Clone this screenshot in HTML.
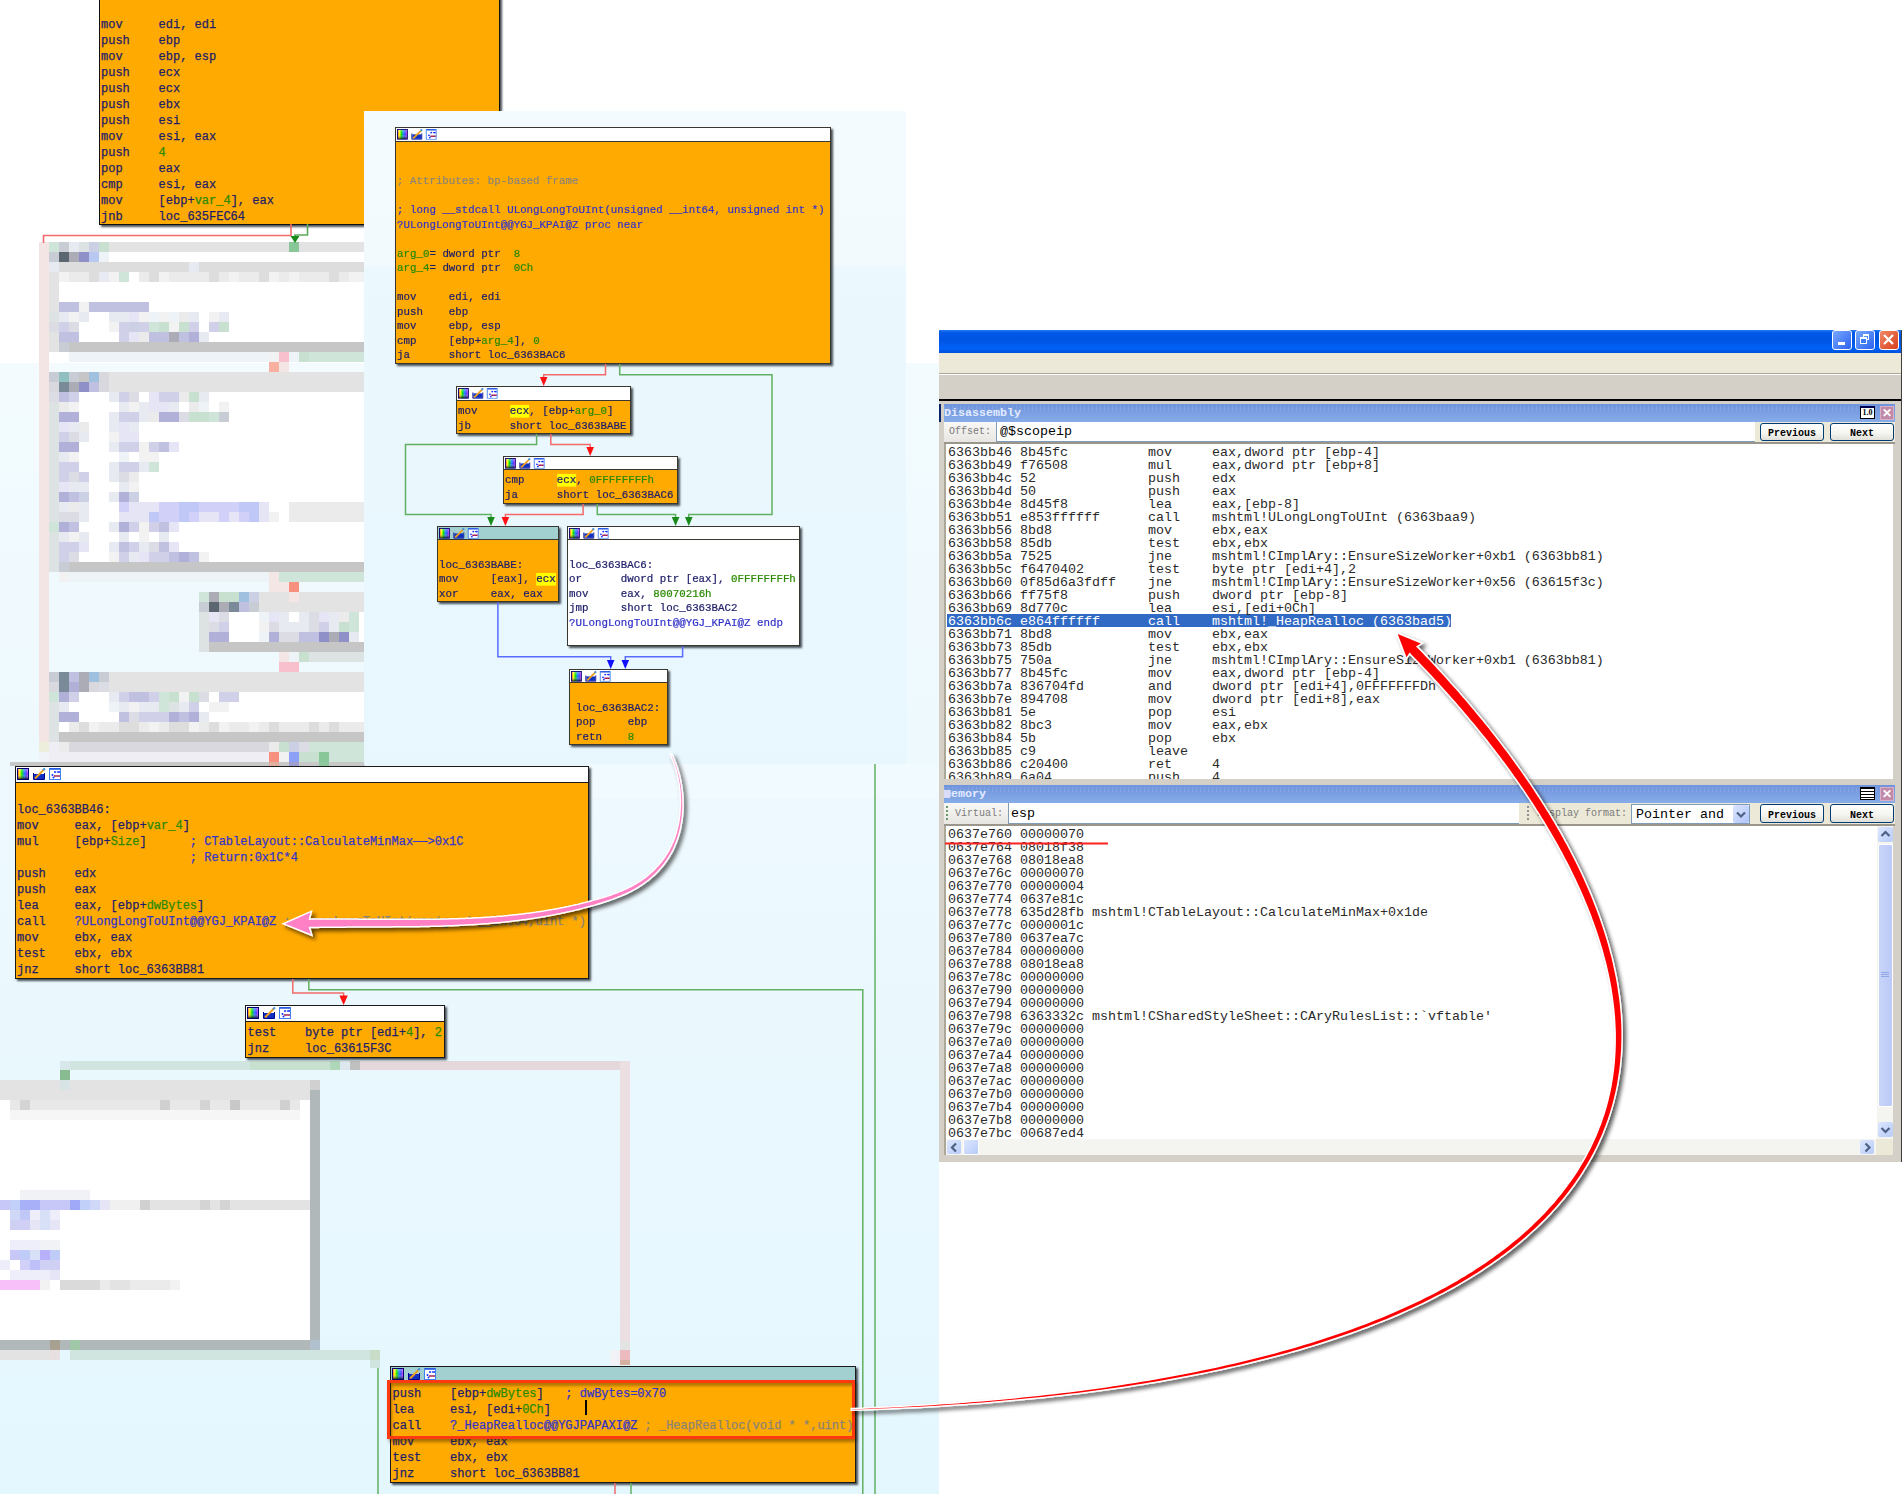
<!DOCTYPE html><html><head><meta charset="utf-8"><style>html,body{margin:0;padding:0;}body{width:1903px;height:1494px;position:relative;overflow:hidden;background:#ffffff;}#r div,#r span.a{position:absolute;}#r div div{position:static;}</style></head><body><div id="r"><div style="left:0;top:363px;width:939px;height:1131px;background:linear-gradient(180deg,#f3fbfe 0%,#edf9fe 40%,#e4f7fe 100%)"></div><div style="left:99px;top:-10px;width:401px;height:235px;background:#ffaa00;border-left:1px solid #111;border-bottom:1px solid #111;border-right:1px solid #111;box-sizing:border-box;box-shadow:2px 2px 2px rgba(30,38,45,0.8)"></div><div style="left:101px;top:16.5px;font:12px/16px 'Liberation Mono', monospace;color:#1e1e6a;white-space:pre;-webkit-text-stroke:0.25px;"><div style="position:static;height:16px;white-space:pre">mov     edi, edi</div><div style="position:static;height:16px;white-space:pre">push    ebp</div><div style="position:static;height:16px;white-space:pre">mov     ebp, esp</div><div style="position:static;height:16px;white-space:pre">push    ecx</div><div style="position:static;height:16px;white-space:pre">push    ecx</div><div style="position:static;height:16px;white-space:pre">push    ebx</div><div style="position:static;height:16px;white-space:pre">push    esi</div><div style="position:static;height:16px;white-space:pre">mov     esi, eax</div><div style="position:static;height:16px;white-space:pre">push    <span style="color:#2a8a00;">4</span></div><div style="position:static;height:16px;white-space:pre">pop     eax</div><div style="position:static;height:16px;white-space:pre">cmp     esi, eax</div><div style="position:static;height:16px;white-space:pre">mov     [ebp+<span style="color:#2a8a00;">var_4</span>], eax</div><div style="position:static;height:16px;white-space:pre">jnb     loc_635FEC64</div></div><div style="left:39px;top:242px;width:10px;height:10px;background:#f3e5e3"></div><div style="left:49px;top:242px;width:10px;height:10px;background:#d0e5da"></div><div style="left:59px;top:242px;width:10px;height:10px;background:#c8ccd5"></div><div style="left:69px;top:242px;width:10px;height:10px;background:#e8eaf2"></div><div style="left:79px;top:242px;width:10px;height:10px;background:#dde3e3"></div><div style="left:89px;top:242px;width:10px;height:10px;background:#ccd0e5"></div><div style="left:99px;top:242px;width:10px;height:10px;background:#c8e0d0"></div><div style="left:109px;top:242px;width:180px;height:10px;background:#e3e3e3"></div><div style="left:289px;top:242px;width:10px;height:10px;background:#88c898"></div><div style="left:299px;top:242px;width:70px;height:10px;background:#e3e3e3"></div><div style="left:39px;top:252px;width:10px;height:10px;background:#f3e5e3"></div><div style="left:49px;top:252px;width:10px;height:10px;background:#c8ccd5"></div><div style="left:59px;top:252px;width:10px;height:10px;background:#5c6670"></div><div style="left:69px;top:252px;width:10px;height:10px;background:#abacb5"></div><div style="left:79px;top:252px;width:10px;height:10px;background:#9090c8"></div><div style="left:89px;top:252px;width:10px;height:10px;background:#b8c8f0"></div><div style="left:99px;top:252px;width:10px;height:10px;background:#eef3f8"></div><div style="left:109px;top:252px;width:260px;height:10px;background:#ffffff"></div><div style="left:39px;top:262px;width:10px;height:10px;background:#f3e5e3"></div><div style="left:49px;top:262px;width:10px;height:10px;background:#e8eaf2"></div><div style="left:59px;top:262px;width:130px;height:10px;background:#dddddd"></div><div style="left:189px;top:262px;width:10px;height:10px;background:#e8eaf2"></div><div style="left:199px;top:262px;width:170px;height:10px;background:#dddddd"></div><div style="left:39px;top:272px;width:10px;height:10px;background:#f3e5e3"></div><div style="left:49px;top:272px;width:10px;height:10px;background:#e3e3e3"></div><div style="left:59px;top:272px;width:10px;height:10px;background:#f2f2f2"></div><div style="left:69px;top:272px;width:20px;height:10px;background:#ebebeb"></div><div style="left:89px;top:272px;width:10px;height:10px;background:#dddddd"></div><div style="left:99px;top:272px;width:10px;height:10px;background:#e8eaf2"></div><div style="left:109px;top:272px;width:10px;height:10px;background:#f2f2f2"></div><div style="left:119px;top:272px;width:10px;height:10px;background:#d0e5da"></div><div style="left:129px;top:272px;width:10px;height:10px;background:#ffffff"></div><div style="left:139px;top:272px;width:10px;height:10px;background:#ebebeb"></div><div style="left:149px;top:272px;width:10px;height:10px;background:#dddddd"></div><div style="left:159px;top:272px;width:10px;height:10px;background:#f2f2f2"></div><div style="left:169px;top:272px;width:40px;height:10px;background:#ebebeb"></div><div style="left:209px;top:272px;width:10px;height:10px;background:#dddddd"></div><div style="left:219px;top:272px;width:10px;height:10px;background:#ebebeb"></div><div style="left:229px;top:272px;width:10px;height:10px;background:#f2f2f2"></div><div style="left:239px;top:272px;width:20px;height:10px;background:#ebebeb"></div><div style="left:259px;top:272px;width:10px;height:10px;background:#dddddd"></div><div style="left:269px;top:272px;width:10px;height:10px;background:#f2f2f2"></div><div style="left:279px;top:272px;width:10px;height:10px;background:#ebebeb"></div><div style="left:289px;top:272px;width:10px;height:10px;background:#f2f2f2"></div><div style="left:299px;top:272px;width:30px;height:10px;background:#ebebeb"></div><div style="left:329px;top:272px;width:10px;height:10px;background:#dddddd"></div><div style="left:339px;top:272px;width:10px;height:10px;background:#ebebeb"></div><div style="left:349px;top:272px;width:20px;height:10px;background:#f2f2f2"></div><div style="left:39px;top:282px;width:10px;height:10px;background:#f3e5e3"></div><div style="left:49px;top:282px;width:10px;height:10px;background:#e3e3e3"></div><div style="left:59px;top:282px;width:310px;height:10px;background:#ffffff"></div><div style="left:39px;top:292px;width:10px;height:10px;background:#f3e5e3"></div><div style="left:49px;top:292px;width:10px;height:10px;background:#e3e3e3"></div><div style="left:59px;top:292px;width:310px;height:10px;background:#ffffff"></div><div style="left:39px;top:302px;width:10px;height:10px;background:#f3e5e3"></div><div style="left:49px;top:302px;width:10px;height:10px;background:#e3e3e3"></div><div style="left:59px;top:302px;width:20px;height:10px;background:#c0c0e0"></div><div style="left:79px;top:302px;width:10px;height:10px;background:#f2f2f2"></div><div style="left:89px;top:302px;width:60px;height:10px;background:#c0c0e0"></div><div style="left:149px;top:302px;width:220px;height:10px;background:#ffffff"></div><div style="left:39px;top:312px;width:10px;height:10px;background:#f3e5e3"></div><div style="left:49px;top:312px;width:10px;height:10px;background:#dde3e3"></div><div style="left:59px;top:312px;width:10px;height:10px;background:#e8eaf2"></div><div style="left:69px;top:312px;width:10px;height:10px;background:#f2f2f2"></div><div style="left:79px;top:312px;width:10px;height:10px;background:#e8eaf2"></div><div style="left:89px;top:312px;width:20px;height:10px;background:#ffffff"></div><div style="left:109px;top:312px;width:20px;height:10px;background:#e8eaf2"></div><div style="left:129px;top:312px;width:10px;height:10px;background:#e5e5f5"></div><div style="left:139px;top:312px;width:10px;height:10px;background:#f2f2f2"></div><div style="left:149px;top:312px;width:10px;height:10px;background:#eef3f8"></div><div style="left:159px;top:312px;width:10px;height:10px;background:#f2f2f2"></div><div style="left:169px;top:312px;width:10px;height:10px;background:#eef3f8"></div><div style="left:179px;top:312px;width:10px;height:10px;background:#ebebeb"></div><div style="left:189px;top:312px;width:10px;height:10px;background:#e8eaf2"></div><div style="left:199px;top:312px;width:10px;height:10px;background:#ffffff"></div><div style="left:209px;top:312px;width:10px;height:10px;background:#f2f2f2"></div><div style="left:219px;top:312px;width:10px;height:10px;background:#e8eaf2"></div><div style="left:229px;top:312px;width:140px;height:10px;background:#ffffff"></div><div style="left:39px;top:322px;width:10px;height:10px;background:#f3e5e3"></div><div style="left:49px;top:322px;width:10px;height:10px;background:#dcdce5"></div><div style="left:59px;top:322px;width:10px;height:10px;background:#d0d0e8"></div><div style="left:69px;top:322px;width:10px;height:10px;background:#dcdce5"></div><div style="left:79px;top:322px;width:30px;height:10px;background:#ffffff"></div><div style="left:109px;top:322px;width:10px;height:10px;background:#f2f2f2"></div><div style="left:119px;top:322px;width:10px;height:10px;background:#d0d0e8"></div><div style="left:129px;top:322px;width:10px;height:10px;background:#ccd0e5"></div><div style="left:139px;top:322px;width:10px;height:10px;background:#d0d0e8"></div><div style="left:149px;top:322px;width:10px;height:10px;background:#d0e5da"></div><div style="left:159px;top:322px;width:10px;height:10px;background:#c8e0d0"></div><div style="left:169px;top:322px;width:10px;height:10px;background:#f2f2f2"></div><div style="left:179px;top:322px;width:10px;height:10px;background:#c8e0d0"></div><div style="left:189px;top:322px;width:10px;height:10px;background:#d0d0e8"></div><div style="left:199px;top:322px;width:10px;height:10px;background:#ffffff"></div><div style="left:209px;top:322px;width:10px;height:10px;background:#d0d0e8"></div><div style="left:219px;top:322px;width:10px;height:10px;background:#c8e0d0"></div><div style="left:229px;top:322px;width:140px;height:10px;background:#ffffff"></div><div style="left:39px;top:332px;width:10px;height:10px;background:#f3e5e3"></div><div style="left:49px;top:332px;width:10px;height:10px;background:#e3e3e3"></div><div style="left:59px;top:332px;width:20px;height:10px;background:#c0c0e0"></div><div style="left:79px;top:332px;width:40px;height:10px;background:#ffffff"></div><div style="left:119px;top:332px;width:10px;height:10px;background:#d0d0e8"></div><div style="left:129px;top:332px;width:10px;height:10px;background:#e5e5f5"></div><div style="left:139px;top:332px;width:10px;height:10px;background:#ebebeb"></div><div style="left:149px;top:332px;width:20px;height:10px;background:#c0c0e0"></div><div style="left:169px;top:332px;width:10px;height:10px;background:#abacb5"></div><div style="left:179px;top:332px;width:10px;height:10px;background:#c0c0e0"></div><div style="left:189px;top:332px;width:10px;height:10px;background:#b0b0d8"></div><div style="left:199px;top:332px;width:10px;height:10px;background:#e8eaf2"></div><div style="left:209px;top:332px;width:160px;height:10px;background:#ffffff"></div><div style="left:39px;top:342px;width:10px;height:10px;background:#f3e5e3"></div><div style="left:49px;top:342px;width:10px;height:10px;background:#e3e3e3"></div><div style="left:59px;top:342px;width:10px;height:10px;background:#c8ccd5"></div><div style="left:69px;top:342px;width:300px;height:10px;background:#c6c6c6"></div><div style="left:39px;top:352px;width:10px;height:10px;background:#f3e5e3"></div><div style="left:49px;top:352px;width:10px;height:10px;background:#ffffff"></div><div style="left:69px;top:352px;width:200px;height:10px;background:#eef3f8"></div><div style="left:269px;top:352px;width:10px;height:10px;background:#f2f2f2"></div><div style="left:279px;top:352px;width:10px;height:10px;background:#f8c0cc"></div><div style="left:289px;top:352px;width:10px;height:10px;background:#eef3f8"></div><div style="left:299px;top:352px;width:10px;height:10px;background:#c8e0d0"></div><div style="left:309px;top:352px;width:60px;height:10px;background:#d0e5da"></div><div style="left:39px;top:362px;width:10px;height:10px;background:#f3e5e3"></div><div style="left:269px;top:362px;width:10px;height:10px;background:#f8b0a0"></div><div style="left:279px;top:362px;width:10px;height:10px;background:#f5e6e6"></div><div style="left:39px;top:372px;width:10px;height:10px;background:#f3e5e3"></div><div style="left:49px;top:372px;width:10px;height:10px;background:#c8ccd5"></div><div style="left:59px;top:372px;width:10px;height:10px;background:#90c0c0"></div><div style="left:69px;top:372px;width:10px;height:10px;background:#c8ccd5"></div><div style="left:79px;top:372px;width:10px;height:10px;background:#c6c6c6"></div><div style="left:89px;top:372px;width:10px;height:10px;background:#a0c0e0"></div><div style="left:99px;top:372px;width:10px;height:10px;background:#d8d8de"></div><div style="left:109px;top:372px;width:260px;height:10px;background:#e3e3e3"></div><div style="left:39px;top:382px;width:10px;height:10px;background:#f3e5e3"></div><div style="left:49px;top:382px;width:10px;height:10px;background:#d8d8de"></div><div style="left:59px;top:382px;width:10px;height:10px;background:#7a8a98"></div><div style="left:69px;top:382px;width:10px;height:10px;background:#abacb5"></div><div style="left:79px;top:382px;width:10px;height:10px;background:#9090c8"></div><div style="left:89px;top:382px;width:10px;height:10px;background:#c0c0e0"></div><div style="left:99px;top:382px;width:10px;height:10px;background:#d8d8de"></div><div style="left:109px;top:382px;width:260px;height:10px;background:#e3e3e3"></div><div style="left:39px;top:392px;width:10px;height:10px;background:#f3e5e3"></div><div style="left:49px;top:392px;width:10px;height:10px;background:#dcdce5"></div><div style="left:59px;top:392px;width:10px;height:10px;background:#c0c0e0"></div><div style="left:69px;top:392px;width:10px;height:10px;background:#d0d0e8"></div><div style="left:79px;top:392px;width:30px;height:10px;background:#ffffff"></div><div style="left:109px;top:392px;width:10px;height:10px;background:#e8eaf2"></div><div style="left:119px;top:392px;width:10px;height:10px;background:#d0d0e8"></div><div style="left:129px;top:392px;width:10px;height:10px;background:#dcdce5"></div><div style="left:139px;top:392px;width:10px;height:10px;background:#ffffff"></div><div style="left:149px;top:392px;width:10px;height:10px;background:#e5e5f5"></div><div style="left:159px;top:392px;width:20px;height:10px;background:#d0d0e8"></div><div style="left:179px;top:392px;width:10px;height:10px;background:#ebebeb"></div><div style="left:189px;top:392px;width:10px;height:10px;background:#c8e0d0"></div><div style="left:199px;top:392px;width:10px;height:10px;background:#e8eaf2"></div><div style="left:209px;top:392px;width:160px;height:10px;background:#ffffff"></div><div style="left:39px;top:402px;width:10px;height:10px;background:#f3e5e3"></div><div style="left:49px;top:402px;width:10px;height:10px;background:#dde3e3"></div><div style="left:59px;top:402px;width:10px;height:10px;background:#ebebeb"></div><div style="left:69px;top:402px;width:10px;height:10px;background:#f2f2f2"></div><div style="left:79px;top:402px;width:40px;height:10px;background:#ffffff"></div><div style="left:119px;top:402px;width:10px;height:10px;background:#e8eaf2"></div><div style="left:129px;top:402px;width:10px;height:10px;background:#f2f2f2"></div><div style="left:139px;top:402px;width:10px;height:10px;background:#e8eaf2"></div><div style="left:149px;top:402px;width:20px;height:10px;background:#e5e5f5"></div><div style="left:169px;top:402px;width:10px;height:10px;background:#e8eaf2"></div><div style="left:179px;top:402px;width:10px;height:10px;background:#ffffff"></div><div style="left:189px;top:402px;width:10px;height:10px;background:#ebebeb"></div><div style="left:199px;top:402px;width:10px;height:10px;background:#eef3f8"></div><div style="left:209px;top:402px;width:10px;height:10px;background:#ffffff"></div><div style="left:219px;top:402px;width:10px;height:10px;background:#f2f2f2"></div><div style="left:229px;top:402px;width:140px;height:10px;background:#ffffff"></div><div style="left:39px;top:412px;width:10px;height:10px;background:#f3e5e3"></div><div style="left:49px;top:412px;width:10px;height:10px;background:#dde3e3"></div><div style="left:59px;top:412px;width:20px;height:10px;background:#b0b0d8"></div><div style="left:79px;top:412px;width:30px;height:10px;background:#ffffff"></div><div style="left:109px;top:412px;width:10px;height:10px;background:#e8eaf2"></div><div style="left:119px;top:412px;width:20px;height:10px;background:#d0d0e8"></div><div style="left:139px;top:412px;width:10px;height:10px;background:#e8eaf2"></div><div style="left:149px;top:412px;width:10px;height:10px;background:#ebebeb"></div><div style="left:159px;top:412px;width:20px;height:10px;background:#b0b0d8"></div><div style="left:179px;top:412px;width:10px;height:10px;background:#dcdce5"></div><div style="left:189px;top:412px;width:20px;height:10px;background:#c8e0d0"></div><div style="left:209px;top:412px;width:10px;height:10px;background:#d0e5da"></div><div style="left:219px;top:412px;width:10px;height:10px;background:#c8ccd5"></div><div style="left:229px;top:412px;width:140px;height:10px;background:#ffffff"></div><div style="left:39px;top:422px;width:10px;height:10px;background:#f3e5e3"></div><div style="left:49px;top:422px;width:10px;height:10px;background:#dde3e3"></div><div style="left:59px;top:422px;width:10px;height:10px;background:#e5e5f5"></div><div style="left:69px;top:422px;width:10px;height:10px;background:#e8eaf2"></div><div style="left:79px;top:422px;width:10px;height:10px;background:#ebebeb"></div><div style="left:89px;top:422px;width:20px;height:10px;background:#ffffff"></div><div style="left:109px;top:422px;width:10px;height:10px;background:#e8eaf2"></div><div style="left:119px;top:422px;width:10px;height:10px;background:#e5e5f5"></div><div style="left:129px;top:422px;width:10px;height:10px;background:#e8eaf2"></div><div style="left:139px;top:422px;width:230px;height:10px;background:#ffffff"></div><div style="left:39px;top:432px;width:10px;height:10px;background:#f3e5e3"></div><div style="left:49px;top:432px;width:10px;height:10px;background:#dde3e3"></div><div style="left:59px;top:432px;width:10px;height:10px;background:#d0d0e8"></div><div style="left:69px;top:432px;width:10px;height:10px;background:#dcdce5"></div><div style="left:79px;top:432px;width:10px;height:10px;background:#e8eaf2"></div><div style="left:89px;top:432px;width:20px;height:10px;background:#ffffff"></div><div style="left:109px;top:432px;width:10px;height:10px;background:#f2f2f2"></div><div style="left:119px;top:432px;width:20px;height:10px;background:#e5e5f5"></div><div style="left:139px;top:432px;width:230px;height:10px;background:#ffffff"></div><div style="left:39px;top:442px;width:10px;height:10px;background:#f3e5e3"></div><div style="left:49px;top:442px;width:10px;height:10px;background:#dde3e3"></div><div style="left:59px;top:442px;width:20px;height:10px;background:#b0b0d8"></div><div style="left:79px;top:442px;width:30px;height:10px;background:#ffffff"></div><div style="left:109px;top:442px;width:10px;height:10px;background:#e8eaf2"></div><div style="left:119px;top:442px;width:20px;height:10px;background:#d0d0e8"></div><div style="left:139px;top:442px;width:10px;height:10px;background:#f2f2f2"></div><div style="left:149px;top:442px;width:10px;height:10px;background:#d0d0e8"></div><div style="left:159px;top:442px;width:10px;height:10px;background:#c0c0e0"></div><div style="left:169px;top:442px;width:10px;height:10px;background:#e5e5f5"></div><div style="left:179px;top:442px;width:190px;height:10px;background:#ffffff"></div><div style="left:39px;top:452px;width:10px;height:10px;background:#f3e5e3"></div><div style="left:49px;top:452px;width:10px;height:10px;background:#dde3e3"></div><div style="left:59px;top:452px;width:10px;height:10px;background:#e8eaf2"></div><div style="left:69px;top:452px;width:10px;height:10px;background:#f2f2f2"></div><div style="left:79px;top:452px;width:40px;height:10px;background:#ffffff"></div><div style="left:119px;top:452px;width:10px;height:10px;background:#eef3f8"></div><div style="left:129px;top:452px;width:10px;height:10px;background:#ffffff"></div><div style="left:139px;top:452px;width:20px;height:10px;background:#f2f2f2"></div><div style="left:159px;top:452px;width:210px;height:10px;background:#ffffff"></div><div style="left:39px;top:462px;width:10px;height:10px;background:#f3e5e3"></div><div style="left:49px;top:462px;width:10px;height:10px;background:#dde3e3"></div><div style="left:59px;top:462px;width:20px;height:10px;background:#d0d0e8"></div><div style="left:79px;top:462px;width:30px;height:10px;background:#ffffff"></div><div style="left:109px;top:462px;width:10px;height:10px;background:#e8eaf2"></div><div style="left:119px;top:462px;width:20px;height:10px;background:#d0d0e8"></div><div style="left:139px;top:462px;width:10px;height:10px;background:#e8eaf2"></div><div style="left:149px;top:462px;width:10px;height:10px;background:#d0e5da"></div><div style="left:159px;top:462px;width:210px;height:10px;background:#ffffff"></div><div style="left:39px;top:472px;width:10px;height:10px;background:#f3e5e3"></div><div style="left:49px;top:472px;width:10px;height:10px;background:#dde3e3"></div><div style="left:59px;top:472px;width:10px;height:10px;background:#d0d0e8"></div><div style="left:69px;top:472px;width:10px;height:10px;background:#dcdce5"></div><div style="left:79px;top:472px;width:10px;height:10px;background:#d0d0e8"></div><div style="left:89px;top:472px;width:20px;height:10px;background:#ffffff"></div><div style="left:109px;top:472px;width:10px;height:10px;background:#e8eaf2"></div><div style="left:119px;top:472px;width:10px;height:10px;background:#dcdce5"></div><div style="left:129px;top:472px;width:10px;height:10px;background:#ebebeb"></div><div style="left:139px;top:472px;width:230px;height:10px;background:#ffffff"></div><div style="left:39px;top:482px;width:10px;height:10px;background:#f3e5e3"></div><div style="left:49px;top:482px;width:10px;height:10px;background:#dde3e3"></div><div style="left:59px;top:482px;width:10px;height:10px;background:#e5e5f5"></div><div style="left:69px;top:482px;width:20px;height:10px;background:#e8eaf2"></div><div style="left:89px;top:482px;width:30px;height:10px;background:#ffffff"></div><div style="left:119px;top:482px;width:10px;height:10px;background:#e8eaf2"></div><div style="left:129px;top:482px;width:10px;height:10px;background:#f2f2f2"></div><div style="left:139px;top:482px;width:230px;height:10px;background:#ffffff"></div><div style="left:39px;top:492px;width:10px;height:10px;background:#f3e5e3"></div><div style="left:49px;top:492px;width:10px;height:10px;background:#dde3e3"></div><div style="left:59px;top:492px;width:10px;height:10px;background:#b0b0d8"></div><div style="left:69px;top:492px;width:10px;height:10px;background:#c0c0e0"></div><div style="left:79px;top:492px;width:10px;height:10px;background:#ccd0e5"></div><div style="left:89px;top:492px;width:20px;height:10px;background:#ffffff"></div><div style="left:109px;top:492px;width:10px;height:10px;background:#e8eaf2"></div><div style="left:119px;top:492px;width:10px;height:10px;background:#b0b0d8"></div><div style="left:129px;top:492px;width:10px;height:10px;background:#ccd0e5"></div><div style="left:139px;top:492px;width:230px;height:10px;background:#ffffff"></div><div style="left:39px;top:502px;width:10px;height:10px;background:#f3e5e3"></div><div style="left:49px;top:502px;width:10px;height:10px;background:#dde3e3"></div><div style="left:59px;top:502px;width:10px;height:10px;background:#e8eaf2"></div><div style="left:69px;top:502px;width:10px;height:10px;background:#ebebeb"></div><div style="left:79px;top:502px;width:10px;height:10px;background:#e8eaf2"></div><div style="left:89px;top:502px;width:30px;height:10px;background:#ffffff"></div><div style="left:119px;top:502px;width:10px;height:10px;background:#d0d0f8"></div><div style="left:129px;top:502px;width:30px;height:10px;background:#e5e5f5"></div><div style="left:159px;top:502px;width:20px;height:10px;background:#d0d0f8"></div><div style="left:179px;top:502px;width:20px;height:10px;background:#c0c8f8"></div><div style="left:199px;top:502px;width:40px;height:10px;background:#d0d0f8"></div><div style="left:239px;top:502px;width:20px;height:10px;background:#c0c8f8"></div><div style="left:259px;top:502px;width:10px;height:10px;background:#e5e5f5"></div><div style="left:269px;top:502px;width:20px;height:10px;background:#ffffff"></div><div style="left:289px;top:502px;width:80px;height:10px;background:#ebebeb"></div><div style="left:39px;top:512px;width:10px;height:10px;background:#f3e5e3"></div><div style="left:49px;top:512px;width:10px;height:10px;background:#dde3e3"></div><div style="left:59px;top:512px;width:20px;height:10px;background:#dcdce5"></div><div style="left:79px;top:512px;width:10px;height:10px;background:#e8eaf2"></div><div style="left:89px;top:512px;width:30px;height:10px;background:#ffffff"></div><div style="left:119px;top:512px;width:30px;height:10px;background:#e5e5f5"></div><div style="left:149px;top:512px;width:10px;height:10px;background:#c0c8f8"></div><div style="left:159px;top:512px;width:20px;height:10px;background:#d0d0f8"></div><div style="left:179px;top:512px;width:10px;height:10px;background:#c0c8f8"></div><div style="left:189px;top:512px;width:10px;height:10px;background:#d0d0f8"></div><div style="left:199px;top:512px;width:20px;height:10px;background:#e5e5f5"></div><div style="left:219px;top:512px;width:10px;height:10px;background:#d0d0f8"></div><div style="left:229px;top:512px;width:10px;height:10px;background:#e5e5f5"></div><div style="left:239px;top:512px;width:10px;height:10px;background:#d0d0f8"></div><div style="left:249px;top:512px;width:10px;height:10px;background:#c0c8f8"></div><div style="left:259px;top:512px;width:10px;height:10px;background:#e5e5f5"></div><div style="left:269px;top:512px;width:10px;height:10px;background:#f2f2f2"></div><div style="left:279px;top:512px;width:10px;height:10px;background:#ffffff"></div><div style="left:289px;top:512px;width:80px;height:10px;background:#ebebeb"></div><div style="left:39px;top:522px;width:10px;height:10px;background:#f3e5e3"></div><div style="left:49px;top:522px;width:10px;height:10px;background:#d0e5da"></div><div style="left:59px;top:522px;width:10px;height:10px;background:#b0b0d8"></div><div style="left:69px;top:522px;width:10px;height:10px;background:#c0c0e0"></div><div style="left:79px;top:522px;width:30px;height:10px;background:#ffffff"></div><div style="left:109px;top:522px;width:10px;height:10px;background:#e8eaf2"></div><div style="left:119px;top:522px;width:10px;height:10px;background:#b0b0d8"></div><div style="left:129px;top:522px;width:10px;height:10px;background:#d0d0e8"></div><div style="left:139px;top:522px;width:10px;height:10px;background:#f2f2f2"></div><div style="left:149px;top:522px;width:10px;height:10px;background:#d0d0e8"></div><div style="left:159px;top:522px;width:10px;height:10px;background:#c0c0e0"></div><div style="left:169px;top:522px;width:10px;height:10px;background:#e5e5f5"></div><div style="left:179px;top:522px;width:190px;height:10px;background:#ffffff"></div><div style="left:39px;top:532px;width:10px;height:10px;background:#f3e5e3"></div><div style="left:49px;top:532px;width:10px;height:10px;background:#dde3e3"></div><div style="left:59px;top:532px;width:10px;height:10px;background:#e8eaf2"></div><div style="left:69px;top:532px;width:10px;height:10px;background:#f2f2f2"></div><div style="left:79px;top:532px;width:10px;height:10px;background:#e8eaf2"></div><div style="left:89px;top:532px;width:30px;height:10px;background:#ffffff"></div><div style="left:119px;top:532px;width:10px;height:10px;background:#e8eaf2"></div><div style="left:129px;top:532px;width:10px;height:10px;background:#ffffff"></div><div style="left:139px;top:532px;width:10px;height:10px;background:#f2f2f2"></div><div style="left:149px;top:532px;width:10px;height:10px;background:#ffffff"></div><div style="left:159px;top:532px;width:10px;height:10px;background:#e8eaf2"></div><div style="left:169px;top:532px;width:200px;height:10px;background:#ffffff"></div><div style="left:39px;top:542px;width:10px;height:10px;background:#f3e5e3"></div><div style="left:49px;top:542px;width:10px;height:10px;background:#dde3e3"></div><div style="left:59px;top:542px;width:20px;height:10px;background:#d0d0e8"></div><div style="left:79px;top:542px;width:10px;height:10px;background:#e5e5f5"></div><div style="left:89px;top:542px;width:20px;height:10px;background:#ffffff"></div><div style="left:109px;top:542px;width:10px;height:10px;background:#e8eaf2"></div><div style="left:119px;top:542px;width:10px;height:10px;background:#c0c0e0"></div><div style="left:129px;top:542px;width:10px;height:10px;background:#d0d0e8"></div><div style="left:139px;top:542px;width:10px;height:10px;background:#e8eaf2"></div><div style="left:149px;top:542px;width:10px;height:10px;background:#dcdce5"></div><div style="left:159px;top:542px;width:10px;height:10px;background:#c0c0e0"></div><div style="left:169px;top:542px;width:10px;height:10px;background:#e5e5f5"></div><div style="left:179px;top:542px;width:190px;height:10px;background:#ffffff"></div><div style="left:39px;top:552px;width:10px;height:10px;background:#f3e5e3"></div><div style="left:49px;top:552px;width:10px;height:10px;background:#dde3e3"></div><div style="left:59px;top:552px;width:10px;height:10px;background:#d0d0e8"></div><div style="left:69px;top:552px;width:10px;height:10px;background:#dcdce5"></div><div style="left:79px;top:552px;width:30px;height:10px;background:#ffffff"></div><div style="left:109px;top:552px;width:10px;height:10px;background:#f2f2f2"></div><div style="left:119px;top:552px;width:10px;height:10px;background:#d0d0e8"></div><div style="left:129px;top:552px;width:10px;height:10px;background:#e8eaf2"></div><div style="left:139px;top:552px;width:10px;height:10px;background:#e5e5f5"></div><div style="left:149px;top:552px;width:20px;height:10px;background:#d0d0e8"></div><div style="left:169px;top:552px;width:10px;height:10px;background:#c0c0e0"></div><div style="left:179px;top:552px;width:10px;height:10px;background:#b0b0d8"></div><div style="left:189px;top:552px;width:10px;height:10px;background:#c0c0e0"></div><div style="left:199px;top:552px;width:10px;height:10px;background:#f2f2f2"></div><div style="left:209px;top:552px;width:160px;height:10px;background:#ffffff"></div><div style="left:39px;top:562px;width:10px;height:10px;background:#f3e5e3"></div><div style="left:49px;top:562px;width:10px;height:10px;background:#dde3e3"></div><div style="left:59px;top:562px;width:10px;height:10px;background:#c8ccd5"></div><div style="left:69px;top:562px;width:300px;height:10px;background:#c6c6c6"></div><div style="left:39px;top:572px;width:10px;height:10px;background:#f3e5e3"></div><div style="left:59px;top:572px;width:10px;height:10px;background:#f2f2f2"></div><div style="left:69px;top:572px;width:200px;height:10px;background:#eef3f8"></div><div style="left:269px;top:572px;width:10px;height:10px;background:#f5e6e6"></div><div style="left:279px;top:572px;width:90px;height:10px;background:#d0e5da"></div><div style="left:39px;top:582px;width:10px;height:10px;background:#f3e5e3"></div><div style="left:269px;top:582px;width:20px;height:10px;background:#f5e6e6"></div><div style="left:289px;top:582px;width:10px;height:10px;background:#f89080"></div><div style="left:39px;top:592px;width:10px;height:10px;background:#f3e5e3"></div><div style="left:199px;top:592px;width:10px;height:10px;background:#d0e5da"></div><div style="left:209px;top:592px;width:10px;height:10px;background:#abacb5"></div><div style="left:219px;top:592px;width:20px;height:10px;background:#c8e0d0"></div><div style="left:239px;top:592px;width:10px;height:10px;background:#a0c0e0"></div><div style="left:249px;top:592px;width:10px;height:10px;background:#ccd0e5"></div><div style="left:259px;top:592px;width:30px;height:10px;background:#e3e3e3"></div><div style="left:289px;top:592px;width:10px;height:10px;background:#f5e6e6"></div><div style="left:299px;top:592px;width:70px;height:10px;background:#e3e3e3"></div><div style="left:39px;top:602px;width:10px;height:10px;background:#f3e5e3"></div><div style="left:199px;top:602px;width:10px;height:10px;background:#c8ccd5"></div><div style="left:209px;top:602px;width:10px;height:10px;background:#5c6670"></div><div style="left:219px;top:602px;width:10px;height:10px;background:#abacb5"></div><div style="left:229px;top:602px;width:10px;height:10px;background:#7a8a98"></div><div style="left:239px;top:602px;width:10px;height:10px;background:#c0c0e0"></div><div style="left:249px;top:602px;width:10px;height:10px;background:#c8ccd5"></div><div style="left:259px;top:602px;width:110px;height:10px;background:#e3e3e3"></div><div style="left:39px;top:612px;width:10px;height:10px;background:#f3e5e3"></div><div style="left:199px;top:612px;width:10px;height:10px;background:#dde3e3"></div><div style="left:209px;top:612px;width:10px;height:10px;background:#e5e5f5"></div><div style="left:219px;top:612px;width:10px;height:10px;background:#dcdce5"></div><div style="left:229px;top:612px;width:30px;height:10px;background:#ffffff"></div><div style="left:259px;top:612px;width:10px;height:10px;background:#eef3f8"></div><div style="left:269px;top:612px;width:10px;height:10px;background:#e5e5f5"></div><div style="left:279px;top:612px;width:10px;height:10px;background:#e8eaf2"></div><div style="left:289px;top:612px;width:10px;height:10px;background:#ffffff"></div><div style="left:299px;top:612px;width:10px;height:10px;background:#e8eaf2"></div><div style="left:309px;top:612px;width:10px;height:10px;background:#dcdce5"></div><div style="left:319px;top:612px;width:10px;height:10px;background:#e5e5f5"></div><div style="left:329px;top:612px;width:10px;height:10px;background:#e8eaf2"></div><div style="left:339px;top:612px;width:10px;height:10px;background:#ebebeb"></div><div style="left:349px;top:612px;width:10px;height:10px;background:#d0e5da"></div><div style="left:359px;top:612px;width:10px;height:10px;background:#ffffff"></div><div style="left:39px;top:622px;width:10px;height:10px;background:#f3e5e3"></div><div style="left:199px;top:622px;width:10px;height:10px;background:#dde3e3"></div><div style="left:209px;top:622px;width:10px;height:10px;background:#dcdce5"></div><div style="left:219px;top:622px;width:10px;height:10px;background:#d0d0e8"></div><div style="left:229px;top:622px;width:30px;height:10px;background:#ffffff"></div><div style="left:259px;top:622px;width:10px;height:10px;background:#f2f2f2"></div><div style="left:269px;top:622px;width:10px;height:10px;background:#dcdce5"></div><div style="left:279px;top:622px;width:30px;height:10px;background:#e8eaf2"></div><div style="left:309px;top:622px;width:10px;height:10px;background:#dcdce5"></div><div style="left:319px;top:622px;width:10px;height:10px;background:#d0d0e8"></div><div style="left:329px;top:622px;width:10px;height:10px;background:#e8eaf2"></div><div style="left:339px;top:622px;width:10px;height:10px;background:#c8e0d0"></div><div style="left:349px;top:622px;width:10px;height:10px;background:#d0e5da"></div><div style="left:359px;top:622px;width:10px;height:10px;background:#ffffff"></div><div style="left:39px;top:632px;width:10px;height:10px;background:#f3e5e3"></div><div style="left:199px;top:632px;width:10px;height:10px;background:#dde3e3"></div><div style="left:209px;top:632px;width:20px;height:10px;background:#b0b0d8"></div><div style="left:229px;top:632px;width:30px;height:10px;background:#ffffff"></div><div style="left:259px;top:632px;width:10px;height:10px;background:#eef3f8"></div><div style="left:269px;top:632px;width:10px;height:10px;background:#b0b0d8"></div><div style="left:279px;top:632px;width:20px;height:10px;background:#dcdce5"></div><div style="left:299px;top:632px;width:20px;height:10px;background:#c0c0e0"></div><div style="left:319px;top:632px;width:10px;height:10px;background:#9090c8"></div><div style="left:329px;top:632px;width:10px;height:10px;background:#abacb5"></div><div style="left:339px;top:632px;width:10px;height:10px;background:#9090c8"></div><div style="left:349px;top:632px;width:10px;height:10px;background:#e8eaf2"></div><div style="left:359px;top:632px;width:10px;height:10px;background:#ffffff"></div><div style="left:39px;top:642px;width:10px;height:10px;background:#f3e5e3"></div><div style="left:199px;top:642px;width:10px;height:10px;background:#dde3e3"></div><div style="left:209px;top:642px;width:160px;height:10px;background:#c6c6c6"></div><div style="left:39px;top:652px;width:10px;height:10px;background:#f3e5e3"></div><div style="left:279px;top:652px;width:10px;height:10px;background:#f5e6e6"></div><div style="left:289px;top:652px;width:10px;height:10px;background:#eef3f8"></div><div style="left:299px;top:652px;width:10px;height:10px;background:#c8e0d0"></div><div style="left:309px;top:652px;width:60px;height:10px;background:#dde3e3"></div><div style="left:39px;top:662px;width:10px;height:10px;background:#f3e5e3"></div><div style="left:279px;top:662px;width:20px;height:10px;background:#f8c0cc"></div><div style="left:39px;top:672px;width:10px;height:10px;background:#f3e5e3"></div><div style="left:49px;top:672px;width:10px;height:10px;background:#c8ccd5"></div><div style="left:59px;top:672px;width:10px;height:10px;background:#7a8a98"></div><div style="left:69px;top:672px;width:10px;height:10px;background:#c0c0e0"></div><div style="left:79px;top:672px;width:10px;height:10px;background:#abacb5"></div><div style="left:89px;top:672px;width:10px;height:10px;background:#a0c0e0"></div><div style="left:99px;top:672px;width:10px;height:10px;background:#c8ccd5"></div><div style="left:109px;top:672px;width:260px;height:10px;background:#e3e3e3"></div><div style="left:39px;top:682px;width:10px;height:10px;background:#f3e5e3"></div><div style="left:49px;top:682px;width:10px;height:10px;background:#d8d8de"></div><div style="left:59px;top:682px;width:10px;height:10px;background:#7a8a98"></div><div style="left:69px;top:682px;width:10px;height:10px;background:#b0b0d8"></div><div style="left:79px;top:682px;width:10px;height:10px;background:#abacb5"></div><div style="left:89px;top:682px;width:10px;height:10px;background:#d8d8de"></div><div style="left:99px;top:682px;width:10px;height:10px;background:#dcdce5"></div><div style="left:109px;top:682px;width:260px;height:10px;background:#e3e3e3"></div><div style="left:39px;top:692px;width:10px;height:10px;background:#f3e5e3"></div><div style="left:49px;top:692px;width:10px;height:10px;background:#d0e5da"></div><div style="left:59px;top:692px;width:10px;height:10px;background:#b0b0d8"></div><div style="left:69px;top:692px;width:10px;height:10px;background:#d0d0e8"></div><div style="left:79px;top:692px;width:30px;height:10px;background:#ffffff"></div><div style="left:109px;top:692px;width:10px;height:10px;background:#e8eaf2"></div><div style="left:119px;top:692px;width:10px;height:10px;background:#d0d0e8"></div><div style="left:129px;top:692px;width:20px;height:10px;background:#c0c0e0"></div><div style="left:149px;top:692px;width:10px;height:10px;background:#d0d0e8"></div><div style="left:159px;top:692px;width:10px;height:10px;background:#d0e5da"></div><div style="left:169px;top:692px;width:10px;height:10px;background:#c8e0d0"></div><div style="left:179px;top:692px;width:10px;height:10px;background:#f2f2f2"></div><div style="left:189px;top:692px;width:10px;height:10px;background:#c8e0d0"></div><div style="left:199px;top:692px;width:10px;height:10px;background:#dcdce5"></div><div style="left:209px;top:692px;width:10px;height:10px;background:#ffffff"></div><div style="left:219px;top:692px;width:20px;height:10px;background:#d0d0e8"></div><div style="left:239px;top:692px;width:130px;height:10px;background:#ffffff"></div><div style="left:39px;top:702px;width:10px;height:10px;background:#f3e5e3"></div><div style="left:49px;top:702px;width:10px;height:10px;background:#dde3e3"></div><div style="left:59px;top:702px;width:10px;height:10px;background:#e8eaf2"></div><div style="left:69px;top:702px;width:40px;height:10px;background:#ffffff"></div><div style="left:109px;top:702px;width:10px;height:10px;background:#eef3f8"></div><div style="left:119px;top:702px;width:10px;height:10px;background:#e8eaf2"></div><div style="left:129px;top:702px;width:10px;height:10px;background:#f2f2f2"></div><div style="left:139px;top:702px;width:20px;height:10px;background:#e8eaf2"></div><div style="left:159px;top:702px;width:10px;height:10px;background:#d0e5da"></div><div style="left:169px;top:702px;width:10px;height:10px;background:#dde3e3"></div><div style="left:179px;top:702px;width:10px;height:10px;background:#e8eaf2"></div><div style="left:189px;top:702px;width:10px;height:10px;background:#d0d0e8"></div><div style="left:199px;top:702px;width:10px;height:10px;background:#ffffff"></div><div style="left:209px;top:702px;width:20px;height:10px;background:#f2f2f2"></div><div style="left:229px;top:702px;width:140px;height:10px;background:#ffffff"></div><div style="left:39px;top:712px;width:10px;height:10px;background:#f3e5e3"></div><div style="left:49px;top:712px;width:10px;height:10px;background:#dde3e3"></div><div style="left:59px;top:712px;width:20px;height:10px;background:#b0b0d8"></div><div style="left:79px;top:712px;width:40px;height:10px;background:#ffffff"></div><div style="left:119px;top:712px;width:10px;height:10px;background:#c0c0e0"></div><div style="left:129px;top:712px;width:10px;height:10px;background:#dcdce5"></div><div style="left:139px;top:712px;width:30px;height:10px;background:#d0d0e8"></div><div style="left:169px;top:712px;width:10px;height:10px;background:#b0b0d8"></div><div style="left:179px;top:712px;width:10px;height:10px;background:#c0c0e0"></div><div style="left:189px;top:712px;width:10px;height:10px;background:#b0b0d8"></div><div style="left:199px;top:712px;width:10px;height:10px;background:#e8eaf2"></div><div style="left:209px;top:712px;width:160px;height:10px;background:#ffffff"></div><div style="left:39px;top:722px;width:10px;height:10px;background:#f3e5e3"></div><div style="left:49px;top:722px;width:10px;height:10px;background:#dde3e3"></div><div style="left:59px;top:722px;width:10px;height:10px;background:#ffffff"></div><div style="left:69px;top:722px;width:10px;height:10px;background:#ebebeb"></div><div style="left:79px;top:722px;width:10px;height:10px;background:#dddddd"></div><div style="left:89px;top:722px;width:10px;height:10px;background:#f2f2f2"></div><div style="left:99px;top:722px;width:20px;height:10px;background:#ebebeb"></div><div style="left:119px;top:722px;width:20px;height:10px;background:#dddddd"></div><div style="left:139px;top:722px;width:10px;height:10px;background:#ebebeb"></div><div style="left:149px;top:722px;width:10px;height:10px;background:#f2f2f2"></div><div style="left:159px;top:722px;width:10px;height:10px;background:#ebebeb"></div><div style="left:169px;top:722px;width:20px;height:10px;background:#dddddd"></div><div style="left:189px;top:722px;width:10px;height:10px;background:#f2f2f2"></div><div style="left:199px;top:722px;width:10px;height:10px;background:#ebebeb"></div><div style="left:209px;top:722px;width:10px;height:10px;background:#dddddd"></div><div style="left:219px;top:722px;width:10px;height:10px;background:#f2f2f2"></div><div style="left:229px;top:722px;width:20px;height:10px;background:#ebebeb"></div><div style="left:249px;top:722px;width:10px;height:10px;background:#f2f2f2"></div><div style="left:259px;top:722px;width:10px;height:10px;background:#ebebeb"></div><div style="left:269px;top:722px;width:10px;height:10px;background:#dddddd"></div><div style="left:279px;top:722px;width:30px;height:10px;background:#ebebeb"></div><div style="left:309px;top:722px;width:10px;height:10px;background:#dddddd"></div><div style="left:319px;top:722px;width:10px;height:10px;background:#ebebeb"></div><div style="left:329px;top:722px;width:10px;height:10px;background:#dddddd"></div><div style="left:339px;top:722px;width:30px;height:10px;background:#ebebeb"></div><div style="left:39px;top:732px;width:10px;height:10px;background:#f3e5e3"></div><div style="left:49px;top:732px;width:10px;height:10px;background:#dde3e3"></div><div style="left:59px;top:732px;width:310px;height:10px;background:#c6c6c6"></div><div style="left:39px;top:742px;width:10px;height:10px;background:#eeeedd"></div><div style="left:49px;top:742px;width:10px;height:10px;background:#f0eef5"></div><div style="left:59px;top:742px;width:10px;height:10px;background:#ebebeb"></div><div style="left:69px;top:742px;width:200px;height:10px;background:#d8d8de"></div><div style="left:269px;top:742px;width:10px;height:10px;background:#ebebeb"></div><div style="left:279px;top:742px;width:10px;height:10px;background:#c8e0d0"></div><div style="left:289px;top:742px;width:10px;height:10px;background:#ccd0e5"></div><div style="left:299px;top:742px;width:10px;height:10px;background:#dcdce5"></div><div style="left:309px;top:742px;width:60px;height:10px;background:#d0e5da"></div><div style="left:49px;top:752px;width:220px;height:10px;background:#f0eef5"></div><div style="left:269px;top:752px;width:10px;height:10px;background:#f89080"></div><div style="left:279px;top:752px;width:10px;height:10px;background:#f2f2f2"></div><div style="left:289px;top:752px;width:10px;height:10px;background:#8ca0f8"></div><div style="left:299px;top:752px;width:20px;height:10px;background:#c8e0d0"></div><div style="left:319px;top:752px;width:10px;height:10px;background:#88c898"></div><div style="left:329px;top:752px;width:40px;height:10px;background:#d0e5da"></div><div style="left:10px;top:762px;width:355px;height:4px;background:#c8c8c8;"></div><div style="left:269px;top:762px;width:10px;height:4px;background:#e0b0a0;"></div><div style="left:289px;top:762px;width:10px;height:4px;background:#a0a0d0;"></div><div style="left:319px;top:762px;width:10px;height:4px;background:#90c8a0;"></div><div style="left:39px;top:752px;width:10px;height:10px;background:#f0f4f8;"></div><div style="left:60px;top:1061px;width:10px;height:9px;background:#d8e8ea"></div><div style="left:70px;top:1061px;width:180px;height:9px;background:#d0e5e0"></div><div style="left:250px;top:1061px;width:80px;height:9px;background:#c8e0d0"></div><div style="left:330px;top:1061px;width:10px;height:9px;background:#b0d8b8"></div><div style="left:340px;top:1061px;width:10px;height:9px;background:#dde8ee"></div><div style="left:350px;top:1061px;width:10px;height:9px;background:#c0c0c0"></div><div style="left:360px;top:1061px;width:270px;height:9px;background:#e5d8dc"></div><div style="left:60px;top:1070px;width:10px;height:10px;background:#88bb90"></div><div style="left:0px;top:1080px;width:310px;height:20px;background:#e3e3e3"></div><div style="left:60px;top:1080px;width:10px;height:10px;background:#d8e3e5"></div><div style="left:310px;top:1080px;width:10px;height:10px;background:#d0d0d0"></div><div style="left:310px;top:1090px;width:10px;height:260px;background:#b0b8ba"></div><div style="left:10px;top:1100px;width:290px;height:10px;background:#e8e8e8"></div><div style="left:0px;top:1100px;width:10px;height:20px;background:#ffffff"></div><div style="left:300px;top:1100px;width:10px;height:20px;background:#ffffff"></div><div style="left:20px;top:1100px;width:10px;height:10px;background:#d4d4d4"></div><div style="left:160px;top:1100px;width:10px;height:10px;background:#d0d0d0"></div><div style="left:230px;top:1100px;width:10px;height:10px;background:#c8c8c8"></div><div style="left:280px;top:1100px;width:10px;height:10px;background:#d0d0d0"></div><div style="left:200px;top:1100px;width:10px;height:10px;background:#d4d4d4"></div><div style="left:10px;top:1110px;width:290px;height:10px;background:#f6f6f6"></div><div style="left:0px;top:1120px;width:310px;height:70px;background:#ffffff"></div><div style="left:0px;top:1190px;width:310px;height:10px;background:#ffffff"></div><div style="left:20px;top:1190px;width:70px;height:10px;background:#f0f2f5"></div><div style="left:0px;top:1200px;width:10px;height:10px;background:#c8c8f8"></div><div style="left:10px;top:1200px;width:10px;height:10px;background:#c0d0f8"></div><div style="left:20px;top:1200px;width:20px;height:10px;background:#a8b0f8"></div><div style="left:40px;top:1200px;width:30px;height:10px;background:#c8c8f8"></div><div style="left:70px;top:1200px;width:10px;height:10px;background:#a0a8f8"></div><div style="left:80px;top:1200px;width:10px;height:10px;background:#c0d0f8"></div><div style="left:90px;top:1200px;width:10px;height:10px;background:#d0d8f8"></div><div style="left:100px;top:1200px;width:10px;height:10px;background:#e5e5f5"></div><div style="left:110px;top:1200px;width:30px;height:10px;background:#f0f0f0"></div><div style="left:140px;top:1200px;width:170px;height:10px;background:#e3e3e3"></div><div style="left:140px;top:1200px;width:10px;height:10px;background:#d0d0d0"></div><div style="left:200px;top:1200px;width:10px;height:10px;background:#d4d4d4"></div><div style="left:220px;top:1200px;width:10px;height:10px;background:#d4d4d4"></div><div style="left:0px;top:1210px;width:310px;height:80px;background:#ffffff"></div><div style="left:10px;top:1210px;width:10px;height:10px;background:#d0d8f8"></div><div style="left:20px;top:1210px;width:10px;height:10px;background:#c0c8f8"></div><div style="left:30px;top:1210px;width:10px;height:10px;background:#eeeefa"></div><div style="left:40px;top:1210px;width:10px;height:10px;background:#d8e0f8"></div><div style="left:50px;top:1210px;width:10px;height:10px;background:#eeeefa"></div><div style="left:10px;top:1220px;width:20px;height:10px;background:#d0d0f5"></div><div style="left:30px;top:1220px;width:10px;height:10px;background:#e5e5f5"></div><div style="left:40px;top:1220px;width:10px;height:10px;background:#d8e0f8"></div><div style="left:50px;top:1220px;width:10px;height:10px;background:#e5e5f5"></div><div style="left:10px;top:1240px;width:30px;height:10px;background:#eeeefa"></div><div style="left:40px;top:1240px;width:20px;height:10px;background:#f0f2f5"></div><div style="left:10px;top:1250px;width:10px;height:10px;background:#c8c8f8"></div><div style="left:20px;top:1250px;width:10px;height:10px;background:#c0ccf8"></div><div style="left:30px;top:1250px;width:10px;height:10px;background:#d8e0f8"></div><div style="left:40px;top:1250px;width:10px;height:10px;background:#b8b0f8"></div><div style="left:50px;top:1250px;width:10px;height:10px;background:#c0ccf8"></div><div style="left:0px;top:1260px;width:10px;height:10px;background:#eeeefa"></div><div style="left:20px;top:1260px;width:10px;height:10px;background:#d0d0f8"></div><div style="left:30px;top:1260px;width:10px;height:10px;background:#c0c0f8"></div><div style="left:40px;top:1260px;width:20px;height:10px;background:#d0d0f5"></div><div style="left:10px;top:1270px;width:40px;height:10px;background:#eeeefa"></div><div style="left:50px;top:1270px;width:10px;height:10px;background:#e5e5f5"></div><div style="left:0px;top:1280px;width:40px;height:10px;background:#f8c0f8"></div><div style="left:40px;top:1280px;width:10px;height:10px;background:#f2f2f2"></div><div style="left:60px;top:1280px;width:40px;height:10px;background:#dadada"></div><div style="left:100px;top:1280px;width:10px;height:10px;background:#ebebeb"></div><div style="left:110px;top:1280px;width:20px;height:10px;background:#e3e3e3"></div><div style="left:130px;top:1280px;width:40px;height:10px;background:#ebebeb"></div><div style="left:170px;top:1280px;width:10px;height:10px;background:#f2f2f2"></div><div style="left:0px;top:1290px;width:310px;height:50px;background:#ffffff"></div><div style="left:0px;top:1340px;width:310px;height:10px;background:#b0b8ba"></div><div style="left:50px;top:1340px;width:10px;height:10px;background:#a8a090"></div><div style="left:70px;top:1340px;width:10px;height:10px;background:#a0c8a8"></div><div style="left:310px;top:1340px;width:10px;height:10px;background:#b0c0cc"></div><div style="left:0px;top:1350px;width:50px;height:10px;background:#e3e3e3"></div><div style="left:50px;top:1350px;width:10px;height:10px;background:#e8e0e0"></div><div style="left:70px;top:1350px;width:300px;height:10px;background:#d0e5e0"></div><div style="left:370px;top:1350px;width:10px;height:10px;background:#c8dcc8"></div><div style="left:370px;top:1360px;width:10px;height:8px;background:#d0e5e0"></div><div style="left:620px;top:1061px;width:10px;height:280px;background:#ebdfe2"></div><div style="left:620px;top:1341px;width:10px;height:9px;background:#e3e3e3"></div><div style="left:620px;top:1350px;width:10px;height:10px;background:#ebbbc0"></div><div style="left:620px;top:1360px;width:10px;height:5px;background:#d4b0a0"></div><div style="left:610px;top:1350px;width:10px;height:15px;background:#f0f2f5"></div><svg style="position:absolute;left:0;top:0" width="1903" height="1494"><path d="M291,224 L291,235.5 L43.5,235.5 L43.5,243" fill="none" stroke="#f06a6a" stroke-width="1.6"/><path d="M307.5,224 L307.5,235 L295,235 L295,238" fill="none" stroke="#5aa85a" stroke-width="1.6"/><path d="M290.5,236 L299.5,236 L295,243 Z" fill="#1a8a1a"/></svg><div style="left:364px;top:111px;width:542px;height:654px;background:linear-gradient(180deg,#f3fbfe 0%,#f2fafe 23.7%,#ebf8fe 23.8%,#e8f7fe 100%)"></div><div style="left:589px;top:764px;width:350px;height:34px;background:#f1fafe;"></div><div style="left:395px;top:127px;width:436px;height:237px;background:#ffaa00;border:1px solid #3a3630;box-sizing:border-box;box-shadow:2px 2px 2px rgba(30,38,45,0.8);"></div><div style="left:396px;top:128px;width:434px;height:14px;background:#ffffff;border-bottom:1px solid #3a3630;box-sizing:border-box"></div><div style="left:397px;top:129px;width:46px;height:12px;transform:scale(0.9);transform-origin:0 0;"><svg width="46" height="12" viewBox="0 0 46 12" style="position:absolute;left:0;top:0"><defs><linearGradient id="hue" x1="0" x2="1" y1="0" y2="0"><stop offset="0" stop-color="#ff3030"/><stop offset="0.2" stop-color="#ffff00"/><stop offset="0.4" stop-color="#00e000"/><stop offset="0.6" stop-color="#2080ff"/><stop offset="0.8" stop-color="#4040ff"/><stop offset="1" stop-color="#ff40ff"/></linearGradient><linearGradient id="shade" x1="0" x2="0" y1="0" y2="1"><stop offset="0" stop-color="#fff" stop-opacity="0.35"/><stop offset="0.5" stop-color="#fff" stop-opacity="0"/><stop offset="1" stop-color="#000" stop-opacity="0.75"/></linearGradient></defs><rect x="0.5" y="0.5" width="11" height="11" fill="url(#hue)" stroke="#000070"/><rect x="1" y="1" width="10" height="10" fill="url(#shade)"/><path d="M16.5,5 V11.5 H27.5 V5" fill="none" stroke="#000090" stroke-width="1"/><rect x="17" y="6" width="10" height="5" fill="#1030c0"/><path d="M18,10.5 L27,1.5" stroke="#f0a020" stroke-width="2"/><path d="M26,2 L28,0.5" stroke="#4090e0" stroke-width="2"/><rect x="32.5" y="0.5" width="11" height="11" fill="#ffffff" stroke="#4080f0"/><path d="M33,1 H43" stroke="#2050e0" stroke-width="1.5"/><circle cx="35.5" cy="7" r="1" fill="#1030ff"/><circle cx="36.5" cy="9.5" r="1" fill="#1030ff"/><circle cx="38" cy="4" r="1" fill="#1030ff"/><circle cx="40.5" cy="4" r="0.8" fill="#1030ff"/><circle cx="42" cy="4" r="1" fill="#1030ff"/><path d="M37,8 H43" stroke="#a02060" stroke-width="1.5"/></svg></div><div style="left:397px;top:145.2px;font:12px/16px 'Liberation Mono', monospace;color:#1e1e6a;white-space:pre;-webkit-text-stroke:0.25px;transform:scale(0.9,0.908);transform-origin:0 0;"><div style="position:static;height:16px;white-space:pre">&nbsp;</div><div style="position:static;height:16px;white-space:pre">&nbsp;</div><div style="position:static;height:16px;white-space:pre"><span style="color:#8c8474;">; Attributes: bp-based frame</span></div><div style="position:static;height:16px;white-space:pre">&nbsp;</div><div style="position:static;height:16px;white-space:pre"><span style="color:#3434c8;">; long __stdcall ULongLongToUInt(unsigned __int64, unsigned int *)</span></div><div style="position:static;height:16px;white-space:pre"><span style="color:#3434c8;">?ULongLongToUInt@@YGJ_KPAI@Z proc near</span></div><div style="position:static;height:16px;white-space:pre">&nbsp;</div><div style="position:static;height:16px;white-space:pre"><span style="color:#2a8a00;">arg_0</span>= dword ptr  <span style="color:#2a8a00;">8</span></div><div style="position:static;height:16px;white-space:pre"><span style="color:#2a8a00;">arg_4</span>= dword ptr  <span style="color:#2a8a00;">0Ch</span></div><div style="position:static;height:16px;white-space:pre">&nbsp;</div><div style="position:static;height:16px;white-space:pre">mov     edi, edi</div><div style="position:static;height:16px;white-space:pre">push    ebp</div><div style="position:static;height:16px;white-space:pre">mov     ebp, esp</div><div style="position:static;height:16px;white-space:pre">cmp     [ebp+<span style="color:#2a8a00;">arg_4</span>], <span style="color:#2a8a00;">0</span></div><div style="position:static;height:16px;white-space:pre">ja      short loc_6363BAC6</div></div><div style="left:456px;top:386px;width:175px;height:48px;background:#ffaa00;border:1px solid #3a3630;box-sizing:border-box;box-shadow:2px 2px 2px rgba(30,38,45,0.8);"></div><div style="left:457px;top:387px;width:173px;height:14px;background:#ffffff;border-bottom:1px solid #3a3630;box-sizing:border-box"></div><div style="left:458px;top:388px;width:46px;height:12px;transform:scale(0.9);transform-origin:0 0;"><svg width="46" height="12" viewBox="0 0 46 12" style="position:absolute;left:0;top:0"><defs><linearGradient id="hue" x1="0" x2="1" y1="0" y2="0"><stop offset="0" stop-color="#ff3030"/><stop offset="0.2" stop-color="#ffff00"/><stop offset="0.4" stop-color="#00e000"/><stop offset="0.6" stop-color="#2080ff"/><stop offset="0.8" stop-color="#4040ff"/><stop offset="1" stop-color="#ff40ff"/></linearGradient><linearGradient id="shade" x1="0" x2="0" y1="0" y2="1"><stop offset="0" stop-color="#fff" stop-opacity="0.35"/><stop offset="0.5" stop-color="#fff" stop-opacity="0"/><stop offset="1" stop-color="#000" stop-opacity="0.75"/></linearGradient></defs><rect x="0.5" y="0.5" width="11" height="11" fill="url(#hue)" stroke="#000070"/><rect x="1" y="1" width="10" height="10" fill="url(#shade)"/><path d="M16.5,5 V11.5 H27.5 V5" fill="none" stroke="#000090" stroke-width="1"/><rect x="17" y="6" width="10" height="5" fill="#1030c0"/><path d="M18,10.5 L27,1.5" stroke="#f0a020" stroke-width="2"/><path d="M26,2 L28,0.5" stroke="#4090e0" stroke-width="2"/><rect x="32.5" y="0.5" width="11" height="11" fill="#ffffff" stroke="#4080f0"/><path d="M33,1 H43" stroke="#2050e0" stroke-width="1.5"/><circle cx="35.5" cy="7" r="1" fill="#1030ff"/><circle cx="36.5" cy="9.5" r="1" fill="#1030ff"/><circle cx="38" cy="4" r="1" fill="#1030ff"/><circle cx="40.5" cy="4" r="0.8" fill="#1030ff"/><circle cx="42" cy="4" r="1" fill="#1030ff"/><path d="M37,8 H43" stroke="#a02060" stroke-width="1.5"/></svg></div><div style="left:458.3px;top:404.1px;font:12px/16px 'Liberation Mono', monospace;color:#1e1e6a;white-space:pre;-webkit-text-stroke:0.25px;transform:scale(0.9,0.908);transform-origin:0 0;"><div style="position:static;height:16px;white-space:pre">mov     <span style="color:#1e1e6a;background:#ffff00;">ecx</span>, [ebp+<span style="color:#2a8a00;">arg_0</span>]</div><div style="position:static;height:16px;white-space:pre">jb      short loc_6363BABE</div></div><div style="left:503px;top:456px;width:175px;height:48px;background:#ffaa00;border:1px solid #3a3630;box-sizing:border-box;box-shadow:2px 2px 2px rgba(30,38,45,0.8);"></div><div style="left:504px;top:457px;width:173px;height:13px;background:#ffffff;border-bottom:1px solid #3a3630;box-sizing:border-box"></div><div style="left:505px;top:458px;width:46px;height:12px;transform:scale(0.9);transform-origin:0 0;"><svg width="46" height="12" viewBox="0 0 46 12" style="position:absolute;left:0;top:0"><defs><linearGradient id="hue" x1="0" x2="1" y1="0" y2="0"><stop offset="0" stop-color="#ff3030"/><stop offset="0.2" stop-color="#ffff00"/><stop offset="0.4" stop-color="#00e000"/><stop offset="0.6" stop-color="#2080ff"/><stop offset="0.8" stop-color="#4040ff"/><stop offset="1" stop-color="#ff40ff"/></linearGradient><linearGradient id="shade" x1="0" x2="0" y1="0" y2="1"><stop offset="0" stop-color="#fff" stop-opacity="0.35"/><stop offset="0.5" stop-color="#fff" stop-opacity="0"/><stop offset="1" stop-color="#000" stop-opacity="0.75"/></linearGradient></defs><rect x="0.5" y="0.5" width="11" height="11" fill="url(#hue)" stroke="#000070"/><rect x="1" y="1" width="10" height="10" fill="url(#shade)"/><path d="M16.5,5 V11.5 H27.5 V5" fill="none" stroke="#000090" stroke-width="1"/><rect x="17" y="6" width="10" height="5" fill="#1030c0"/><path d="M18,10.5 L27,1.5" stroke="#f0a020" stroke-width="2"/><path d="M26,2 L28,0.5" stroke="#4090e0" stroke-width="2"/><rect x="32.5" y="0.5" width="11" height="11" fill="#ffffff" stroke="#4080f0"/><path d="M33,1 H43" stroke="#2050e0" stroke-width="1.5"/><circle cx="35.5" cy="7" r="1" fill="#1030ff"/><circle cx="36.5" cy="9.5" r="1" fill="#1030ff"/><circle cx="38" cy="4" r="1" fill="#1030ff"/><circle cx="40.5" cy="4" r="0.8" fill="#1030ff"/><circle cx="42" cy="4" r="1" fill="#1030ff"/><path d="M37,8 H43" stroke="#a02060" stroke-width="1.5"/></svg></div><div style="left:505px;top:473.4px;font:12px/16px 'Liberation Mono', monospace;color:#1e1e6a;white-space:pre;-webkit-text-stroke:0.25px;transform:scale(0.9,0.908);transform-origin:0 0;"><div style="position:static;height:16px;white-space:pre">cmp     <span style="color:#1e1e6a;background:#ffff00;">ecx</span>, <span style="color:#2a8a00;">0FFFFFFFFh</span></div><div style="position:static;height:16px;white-space:pre">ja      short loc_6363BAC6</div></div><div style="left:437px;top:526px;width:122px;height:76px;background:#ffaa00;border:1px solid #3a3630;box-sizing:border-box;box-shadow:2px 2px 2px rgba(30,38,45,0.8);"></div><div style="left:438px;top:527px;width:120px;height:13px;background:#a2d0d0;border-bottom:1px solid #3a3630;box-sizing:border-box"></div><div style="left:439px;top:528px;width:46px;height:12px;transform:scale(0.9);transform-origin:0 0;"><svg width="46" height="12" viewBox="0 0 46 12" style="position:absolute;left:0;top:0"><defs><linearGradient id="hue" x1="0" x2="1" y1="0" y2="0"><stop offset="0" stop-color="#ff3030"/><stop offset="0.2" stop-color="#ffff00"/><stop offset="0.4" stop-color="#00e000"/><stop offset="0.6" stop-color="#2080ff"/><stop offset="0.8" stop-color="#4040ff"/><stop offset="1" stop-color="#ff40ff"/></linearGradient><linearGradient id="shade" x1="0" x2="0" y1="0" y2="1"><stop offset="0" stop-color="#fff" stop-opacity="0.35"/><stop offset="0.5" stop-color="#fff" stop-opacity="0"/><stop offset="1" stop-color="#000" stop-opacity="0.75"/></linearGradient></defs><rect x="0.5" y="0.5" width="11" height="11" fill="url(#hue)" stroke="#000070"/><rect x="1" y="1" width="10" height="10" fill="url(#shade)"/><path d="M16.5,5 V11.5 H27.5 V5" fill="none" stroke="#000090" stroke-width="1"/><rect x="17" y="6" width="10" height="5" fill="#1030c0"/><path d="M18,10.5 L27,1.5" stroke="#f0a020" stroke-width="2"/><path d="M26,2 L28,0.5" stroke="#4090e0" stroke-width="2"/><rect x="32.5" y="0.5" width="11" height="11" fill="#ffffff" stroke="#4080f0"/><path d="M33,1 H43" stroke="#2050e0" stroke-width="1.5"/><circle cx="35.5" cy="7" r="1" fill="#1030ff"/><circle cx="36.5" cy="9.5" r="1" fill="#1030ff"/><circle cx="38" cy="4" r="1" fill="#1030ff"/><circle cx="40.5" cy="4" r="0.8" fill="#1030ff"/><circle cx="42" cy="4" r="1" fill="#1030ff"/><path d="M37,8 H43" stroke="#a02060" stroke-width="1.5"/></svg></div><div style="left:439px;top:543.3px;font:12px/16px 'Liberation Mono', monospace;color:#1e1e6a;white-space:pre;-webkit-text-stroke:0.25px;transform:scale(0.9,0.908);transform-origin:0 0;"><div style="position:static;height:16px;white-space:pre">&nbsp;</div><div style="position:static;height:16px;white-space:pre">loc_6363BABE:</div><div style="position:static;height:16px;white-space:pre">mov     [eax], <span style="color:#1e1e6a;background:#ffff00;">ecx</span></div><div style="position:static;height:16px;white-space:pre">xor     eax, eax</div></div><div style="left:567px;top:526px;width:233px;height:120px;background:#ffffff;border:1px solid #3a3630;box-sizing:border-box;box-shadow:2px 2px 2px rgba(30,38,45,0.8);"></div><div style="left:568px;top:527px;width:231px;height:13px;background:#ffffff;border-bottom:1px solid #3a3630;box-sizing:border-box"></div><div style="left:569px;top:528px;width:46px;height:12px;transform:scale(0.9);transform-origin:0 0;"><svg width="46" height="12" viewBox="0 0 46 12" style="position:absolute;left:0;top:0"><defs><linearGradient id="hue" x1="0" x2="1" y1="0" y2="0"><stop offset="0" stop-color="#ff3030"/><stop offset="0.2" stop-color="#ffff00"/><stop offset="0.4" stop-color="#00e000"/><stop offset="0.6" stop-color="#2080ff"/><stop offset="0.8" stop-color="#4040ff"/><stop offset="1" stop-color="#ff40ff"/></linearGradient><linearGradient id="shade" x1="0" x2="0" y1="0" y2="1"><stop offset="0" stop-color="#fff" stop-opacity="0.35"/><stop offset="0.5" stop-color="#fff" stop-opacity="0"/><stop offset="1" stop-color="#000" stop-opacity="0.75"/></linearGradient></defs><rect x="0.5" y="0.5" width="11" height="11" fill="url(#hue)" stroke="#000070"/><rect x="1" y="1" width="10" height="10" fill="url(#shade)"/><path d="M16.5,5 V11.5 H27.5 V5" fill="none" stroke="#000090" stroke-width="1"/><rect x="17" y="6" width="10" height="5" fill="#1030c0"/><path d="M18,10.5 L27,1.5" stroke="#f0a020" stroke-width="2"/><path d="M26,2 L28,0.5" stroke="#4090e0" stroke-width="2"/><rect x="32.5" y="0.5" width="11" height="11" fill="#ffffff" stroke="#4080f0"/><path d="M33,1 H43" stroke="#2050e0" stroke-width="1.5"/><circle cx="35.5" cy="7" r="1" fill="#1030ff"/><circle cx="36.5" cy="9.5" r="1" fill="#1030ff"/><circle cx="38" cy="4" r="1" fill="#1030ff"/><circle cx="40.5" cy="4" r="0.8" fill="#1030ff"/><circle cx="42" cy="4" r="1" fill="#1030ff"/><path d="M37,8 H43" stroke="#a02060" stroke-width="1.5"/></svg></div><div style="left:568.5px;top:543.3px;font:12px/16px 'Liberation Mono', monospace;color:#1e1e6a;white-space:pre;-webkit-text-stroke:0.25px;transform:scale(0.9,0.908);transform-origin:0 0;"><div style="position:static;height:16px;white-space:pre">&nbsp;</div><div style="position:static;height:16px;white-space:pre">loc_6363BAC6:</div><div style="position:static;height:16px;white-space:pre">or      dword ptr [eax], <span style="color:#2a8a00;">0FFFFFFFFh</span></div><div style="position:static;height:16px;white-space:pre">mov     eax, <span style="color:#2a8a00;">80070216h</span></div><div style="position:static;height:16px;white-space:pre">jmp     short loc_6363BAC2</div><div style="position:static;height:16px;white-space:pre"><span style="color:#3434c8;">?ULongLongToUInt@@YGJ_KPAI@Z endp</span></div></div><div style="left:569px;top:669px;width:99px;height:76px;background:#ffaa00;border:1px solid #3a3630;box-sizing:border-box;box-shadow:2px 2px 2px rgba(30,38,45,0.8);"></div><div style="left:570px;top:670px;width:97px;height:13px;background:#ffffff;border-bottom:1px solid #3a3630;box-sizing:border-box"></div><div style="left:571px;top:671px;width:46px;height:12px;transform:scale(0.9);transform-origin:0 0;"><svg width="46" height="12" viewBox="0 0 46 12" style="position:absolute;left:0;top:0"><defs><linearGradient id="hue" x1="0" x2="1" y1="0" y2="0"><stop offset="0" stop-color="#ff3030"/><stop offset="0.2" stop-color="#ffff00"/><stop offset="0.4" stop-color="#00e000"/><stop offset="0.6" stop-color="#2080ff"/><stop offset="0.8" stop-color="#4040ff"/><stop offset="1" stop-color="#ff40ff"/></linearGradient><linearGradient id="shade" x1="0" x2="0" y1="0" y2="1"><stop offset="0" stop-color="#fff" stop-opacity="0.35"/><stop offset="0.5" stop-color="#fff" stop-opacity="0"/><stop offset="1" stop-color="#000" stop-opacity="0.75"/></linearGradient></defs><rect x="0.5" y="0.5" width="11" height="11" fill="url(#hue)" stroke="#000070"/><rect x="1" y="1" width="10" height="10" fill="url(#shade)"/><path d="M16.5,5 V11.5 H27.5 V5" fill="none" stroke="#000090" stroke-width="1"/><rect x="17" y="6" width="10" height="5" fill="#1030c0"/><path d="M18,10.5 L27,1.5" stroke="#f0a020" stroke-width="2"/><path d="M26,2 L28,0.5" stroke="#4090e0" stroke-width="2"/><rect x="32.5" y="0.5" width="11" height="11" fill="#ffffff" stroke="#4080f0"/><path d="M33,1 H43" stroke="#2050e0" stroke-width="1.5"/><circle cx="35.5" cy="7" r="1" fill="#1030ff"/><circle cx="36.5" cy="9.5" r="1" fill="#1030ff"/><circle cx="38" cy="4" r="1" fill="#1030ff"/><circle cx="40.5" cy="4" r="0.8" fill="#1030ff"/><circle cx="42" cy="4" r="1" fill="#1030ff"/><path d="M37,8 H43" stroke="#a02060" stroke-width="1.5"/></svg></div><div style="left:576px;top:685.5px;font:12px/16px 'Liberation Mono', monospace;color:#1e1e6a;white-space:pre;-webkit-text-stroke:0.25px;transform:scale(0.9,0.908);transform-origin:0 0;"><div style="position:static;height:16px;white-space:pre">&nbsp;</div><div style="position:static;height:16px;white-space:pre">loc_6363BAC2:</div><div style="position:static;height:16px;white-space:pre">pop     ebp</div><div style="position:static;height:16px;white-space:pre">retn    <span style="color:#2a8a00;">8</span></div></div><svg style="position:absolute;left:0;top:0" width="1903" height="1494"><path d="M605.5,364 L605.5,374.7 L543.7,374.7 L543.7,378" fill="none" stroke="#f26a6a" stroke-width="1.5"/><path d="M619.7,364 L619.7,374.7 L772,374.7 L772,514.5 L688.8,514.5 L688.8,518" fill="none" stroke="#62b062" stroke-width="1.5"/><path d="M536.6,434 L536.6,444.5 L405.5,444.5 L405.5,514.5 L491,514.5 L491,518" fill="none" stroke="#62b062" stroke-width="1.5"/><path d="M550.8,434 L550.8,444.5 L590.2,444.5 L590.2,448" fill="none" stroke="#f26a6a" stroke-width="1.5"/><path d="M583.1,504 L583.1,514.5 L505.4,514.5 L505.4,518" fill="none" stroke="#f26a6a" stroke-width="1.5"/><path d="M597.3,504 L597.3,514.5 L675.6,514.5 L675.6,518" fill="none" stroke="#62b062" stroke-width="1.5"/><path d="M497.9,602 L497.9,656.8 L610.7,656.8 L610.7,660" fill="none" stroke="#5a6cff" stroke-width="1.5"/><path d="M682.6,646 L682.6,656.8 L625.3,656.8 L625.3,660" fill="none" stroke="#5a6cff" stroke-width="1.5"/><path d="M539.9000000000001,377 L547.5,377 L543.7,386 Z" fill="#ff1010"/><path d="M586.4000000000001,447 L594.0,447 L590.2,456 Z" fill="#ff1010"/><path d="M501.59999999999997,517 L509.2,517 L505.4,526 Z" fill="#ff1010"/><path d="M487.2,517 L494.8,517 L491,526 Z" fill="#1a8a1a"/><path d="M671.8000000000001,517 L679.4,517 L675.6,526 Z" fill="#1a8a1a"/><path d="M685.0,517 L692.5999999999999,517 L688.8,526 Z" fill="#1a8a1a"/><path d="M606.9000000000001,660 L614.5,660 L610.7,669 Z" fill="#1010ff"/><path d="M621.5,660 L629.0999999999999,660 L625.3,669 Z" fill="#1010ff"/></svg><div style="left:15px;top:766px;width:574px;height:213px;background:#ffaa00;border:1px solid #1a1a1a;box-sizing:border-box;box-shadow:2px 2px 2px rgba(30,38,45,0.8);"></div><div style="left:16px;top:767px;width:572px;height:16px;background:#ffffff;border-bottom:1px solid #1a1a1a;box-sizing:border-box"></div><div style="left:17px;top:768px;width:46px;height:12px;"><svg width="46" height="12" viewBox="0 0 46 12" style="position:absolute;left:0;top:0"><defs><linearGradient id="hue" x1="0" x2="1" y1="0" y2="0"><stop offset="0" stop-color="#ff3030"/><stop offset="0.2" stop-color="#ffff00"/><stop offset="0.4" stop-color="#00e000"/><stop offset="0.6" stop-color="#2080ff"/><stop offset="0.8" stop-color="#4040ff"/><stop offset="1" stop-color="#ff40ff"/></linearGradient><linearGradient id="shade" x1="0" x2="0" y1="0" y2="1"><stop offset="0" stop-color="#fff" stop-opacity="0.35"/><stop offset="0.5" stop-color="#fff" stop-opacity="0"/><stop offset="1" stop-color="#000" stop-opacity="0.75"/></linearGradient></defs><rect x="0.5" y="0.5" width="11" height="11" fill="url(#hue)" stroke="#000070"/><rect x="1" y="1" width="10" height="10" fill="url(#shade)"/><path d="M16.5,5 V11.5 H27.5 V5" fill="none" stroke="#000090" stroke-width="1"/><rect x="17" y="6" width="10" height="5" fill="#1030c0"/><path d="M18,10.5 L27,1.5" stroke="#f0a020" stroke-width="2"/><path d="M26,2 L28,0.5" stroke="#4090e0" stroke-width="2"/><rect x="32.5" y="0.5" width="11" height="11" fill="#ffffff" stroke="#4080f0"/><path d="M33,1 H43" stroke="#2050e0" stroke-width="1.5"/><circle cx="35.5" cy="7" r="1" fill="#1030ff"/><circle cx="36.5" cy="9.5" r="1" fill="#1030ff"/><circle cx="38" cy="4" r="1" fill="#1030ff"/><circle cx="40.5" cy="4" r="0.8" fill="#1030ff"/><circle cx="42" cy="4" r="1" fill="#1030ff"/><path d="M37,8 H43" stroke="#a02060" stroke-width="1.5"/></svg></div><div style="left:17px;top:786.2px;font:12px/16px 'Liberation Mono', monospace;color:#1e1e6a;white-space:pre;-webkit-text-stroke:0.25px;"><div style="position:static;height:16px;white-space:pre">&nbsp;</div><div style="position:static;height:16px;white-space:pre">loc_6363BB46:</div><div style="position:static;height:16px;white-space:pre">mov     eax, [ebp+<span style="color:#2a8a00;">var_4</span>]</div><div style="position:static;height:16px;white-space:pre">mul     [ebp+<span style="color:#2a8a00;">Size</span>]      <span style="color:#3434c8;">; CTableLayout::CalculateMinMax——&gt;0x1C</span></div><div style="position:static;height:16px;white-space:pre">                        <span style="color:#3434c8;">; Return:0x1C*4</span></div><div style="position:static;height:16px;white-space:pre">push    edx</div><div style="position:static;height:16px;white-space:pre">push    eax</div><div style="position:static;height:16px;white-space:pre">lea     eax, [ebp+<span style="color:#2a8a00;">dwBytes</span>]</div><div style="position:static;height:16px;white-space:pre">call    <span style="color:#3434c8;">?ULongLongToUInt@@YGJ_KPAI@Z</span> <span style="color:#8c8474;">; ULongLongToUInt(unsigned __int64,uint *)</span></div><div style="position:static;height:16px;white-space:pre">mov     ebx, eax</div><div style="position:static;height:16px;white-space:pre">test    ebx, ebx</div><div style="position:static;height:16px;white-space:pre">jnz     short loc_6363BB81</div></div><div style="left:245px;top:1005px;width:200px;height:53px;background:#ffaa00;border:1px solid #1a1a1a;box-sizing:border-box;box-shadow:2px 2px 2px rgba(30,38,45,0.8);"></div><div style="left:246px;top:1006px;width:198px;height:16px;background:#ffffff;border-bottom:1px solid #1a1a1a;box-sizing:border-box"></div><div style="left:247px;top:1007px;width:46px;height:12px;"><svg width="46" height="12" viewBox="0 0 46 12" style="position:absolute;left:0;top:0"><defs><linearGradient id="hue" x1="0" x2="1" y1="0" y2="0"><stop offset="0" stop-color="#ff3030"/><stop offset="0.2" stop-color="#ffff00"/><stop offset="0.4" stop-color="#00e000"/><stop offset="0.6" stop-color="#2080ff"/><stop offset="0.8" stop-color="#4040ff"/><stop offset="1" stop-color="#ff40ff"/></linearGradient><linearGradient id="shade" x1="0" x2="0" y1="0" y2="1"><stop offset="0" stop-color="#fff" stop-opacity="0.35"/><stop offset="0.5" stop-color="#fff" stop-opacity="0"/><stop offset="1" stop-color="#000" stop-opacity="0.75"/></linearGradient></defs><rect x="0.5" y="0.5" width="11" height="11" fill="url(#hue)" stroke="#000070"/><rect x="1" y="1" width="10" height="10" fill="url(#shade)"/><path d="M16.5,5 V11.5 H27.5 V5" fill="none" stroke="#000090" stroke-width="1"/><rect x="17" y="6" width="10" height="5" fill="#1030c0"/><path d="M18,10.5 L27,1.5" stroke="#f0a020" stroke-width="2"/><path d="M26,2 L28,0.5" stroke="#4090e0" stroke-width="2"/><rect x="32.5" y="0.5" width="11" height="11" fill="#ffffff" stroke="#4080f0"/><path d="M33,1 H43" stroke="#2050e0" stroke-width="1.5"/><circle cx="35.5" cy="7" r="1" fill="#1030ff"/><circle cx="36.5" cy="9.5" r="1" fill="#1030ff"/><circle cx="38" cy="4" r="1" fill="#1030ff"/><circle cx="40.5" cy="4" r="0.8" fill="#1030ff"/><circle cx="42" cy="4" r="1" fill="#1030ff"/><path d="M37,8 H43" stroke="#a02060" stroke-width="1.5"/></svg></div><div style="left:247.5px;top:1025.4px;font:12px/16px 'Liberation Mono', monospace;color:#1e1e6a;white-space:pre;-webkit-text-stroke:0.25px;"><div style="position:static;height:16px;white-space:pre">test    byte ptr [edi+<span style="color:#2a8a00;">4</span>], <span style="color:#2a8a00;">2</span></div><div style="position:static;height:16px;white-space:pre">jnz     loc_63615F3C</div></div><div style="left:390px;top:1366px;width:466px;height:117px;background:#ffaa00;border:1px solid #1a1a1a;box-sizing:border-box;box-shadow:2px 2px 2px rgba(30,38,45,0.8);"></div><div style="left:391px;top:1367px;width:464px;height:14px;background:#a2d0d0;border-bottom:1px solid #1a1a1a;box-sizing:border-box"></div><div style="left:392px;top:1368px;width:46px;height:12px;"><svg width="46" height="12" viewBox="0 0 46 12" style="position:absolute;left:0;top:0"><defs><linearGradient id="hue" x1="0" x2="1" y1="0" y2="0"><stop offset="0" stop-color="#ff3030"/><stop offset="0.2" stop-color="#ffff00"/><stop offset="0.4" stop-color="#00e000"/><stop offset="0.6" stop-color="#2080ff"/><stop offset="0.8" stop-color="#4040ff"/><stop offset="1" stop-color="#ff40ff"/></linearGradient><linearGradient id="shade" x1="0" x2="0" y1="0" y2="1"><stop offset="0" stop-color="#fff" stop-opacity="0.35"/><stop offset="0.5" stop-color="#fff" stop-opacity="0"/><stop offset="1" stop-color="#000" stop-opacity="0.75"/></linearGradient></defs><rect x="0.5" y="0.5" width="11" height="11" fill="url(#hue)" stroke="#000070"/><rect x="1" y="1" width="10" height="10" fill="url(#shade)"/><path d="M16.5,5 V11.5 H27.5 V5" fill="none" stroke="#000090" stroke-width="1"/><rect x="17" y="6" width="10" height="5" fill="#1030c0"/><path d="M18,10.5 L27,1.5" stroke="#f0a020" stroke-width="2"/><path d="M26,2 L28,0.5" stroke="#4090e0" stroke-width="2"/><rect x="32.5" y="0.5" width="11" height="11" fill="#ffffff" stroke="#4080f0"/><path d="M33,1 H43" stroke="#2050e0" stroke-width="1.5"/><circle cx="35.5" cy="7" r="1" fill="#1030ff"/><circle cx="36.5" cy="9.5" r="1" fill="#1030ff"/><circle cx="38" cy="4" r="1" fill="#1030ff"/><circle cx="40.5" cy="4" r="0.8" fill="#1030ff"/><circle cx="42" cy="4" r="1" fill="#1030ff"/><path d="M37,8 H43" stroke="#a02060" stroke-width="1.5"/></svg></div><div style="left:392.5px;top:1386.3px;font:12px/16px 'Liberation Mono', monospace;color:#1e1e6a;white-space:pre;-webkit-text-stroke:0.25px;"><div style="position:static;height:16px;white-space:pre">push    [ebp+<span style="color:#2a8a00;">dwBytes</span>]   <span style="color:#3434c8;">; dwBytes=0x70</span></div><div style="position:static;height:16px;white-space:pre">lea     esi, [edi+<span style="color:#2a8a00;">0Ch</span>]</div><div style="position:static;height:16px;white-space:pre">call    <span style="color:#3434c8;">?_HeapRealloc@@YGJPAPAXI@Z</span> <span style="color:#8c8474;">; _HeapRealloc(void * *,uint)</span></div><div style="position:static;height:16px;white-space:pre">mov     ebx, eax</div><div style="position:static;height:16px;white-space:pre">test    ebx, ebx</div><div style="position:static;height:16px;white-space:pre">jnz     short loc_6363BB81</div></div><div style="left:585px;top:1400px;width:2px;height:15px;background:#000000;"></div><div style="left:387px;top:1380px;width:468px;height:59px;border:3px solid #ff3a10;box-sizing:border-box;box-shadow:2px 3px 3px rgba(60,40,0,0.45), inset 2px 3px 3px rgba(60,40,0,0.4)"></div><svg style="position:absolute;left:0;top:0" width="1903" height="1494"><path d="M292.8,979 L292.8,992.9 L343.6,992.9 L343.6,996" fill="none" stroke="#f26a6a" stroke-width="1.5"/><path d="M308.8,979 L308.8,989.7 L862.8,989.7 L862.8,1494" fill="none" stroke="#62b062" stroke-width="1.5"/><path d="M875,764 L875,1494" fill="none" stroke="#62b062" stroke-width="1.5"/><path d="M378,1368 L378,1494" fill="none" stroke="#62b062" stroke-width="1.5"/><path d="M615,1483 L615,1494" fill="none" stroke="#f26a6a" stroke-width="1.5"/><path d="M631,1483 L631,1494" fill="none" stroke="#62b062" stroke-width="1.5"/><path d="M339.4,995.5 L347.8,995.5 L343.6,1005 Z" fill="#ff1010"/></svg><div style="left:939px;top:330px;width:963px;height:832px;background:#d4d0c8;"></div><div style="left:1901px;top:330px;width:1px;height:832px;background:#404040;"></div><div style="left:939px;top:330px;width:962px;height:23px;background:linear-gradient(180deg,#2a7af5 0%,#0058e6 12%,#0054e3 45%,#0062f8 80%,#0050d8 100%)"></div><div style="left:1832px;top:330px;width:20px;height:20px;border:1px solid #ffffff;border-radius:3px;box-sizing:border-box;background:linear-gradient(135deg,#7aa8ff,#2a62f0)"><div style="position:absolute;left:5px;top:11px;width:7px;height:3px;background:#fff"></div></div><div style="left:1855px;top:330px;width:20px;height:20px;border:1px solid #ffffff;border-radius:3px;box-sizing:border-box;background:linear-gradient(135deg,#7aa8ff,#2a62f0)"><div style="position:absolute;left:7px;top:3px;width:6px;height:6px;border:1px solid #fff;border-top-width:2px;box-sizing:border-box"></div><div style="position:absolute;left:4px;top:6px;width:7px;height:7px;border:1px solid #fff;border-top-width:2px;background:#3d7af8;box-sizing:border-box"></div></div><div style="left:1879px;top:330px;width:20px;height:20px;border:1px solid #ffffff;border-radius:3px;box-sizing:border-box;background:linear-gradient(135deg,#f08a6a,#d8401a)"><svg width="20" height="20" style="position:absolute;left:-1px;top:-1px"><path d="M5,5 L14,14 M14,5 L5,14" stroke="#fff" stroke-width="2.2"/></svg></div><div style="left:939px;top:353px;width:962px;height:20px;background:#ece9d8;"></div><div style="left:939px;top:373px;width:962px;height:1px;background:#aca899;"></div><div style="left:939px;top:374px;width:962px;height:1px;background:#ffffff;"></div><div style="left:939px;top:375px;width:962px;height:25px;background:#d4d0c8;"></div><div style="left:939px;top:399px;width:962px;height:2px;background:#000000;"></div><div style="left:939px;top:404px;width:2px;height:18px;background:#0a246a;"></div><div style="left:944px;top:404px;width:951px;height:18px;background:linear-gradient(180deg,#7094dc 0%,#7b9fe2 50%,#86ace8 100%)"></div><div style="left:944px;top:406px;width:951px;height:5px;background:repeating-linear-gradient(90deg,rgba(255,255,255,0.10) 0 1px,transparent 1px 4px)"></div><div style="left:944px;top:404px;height:18px;font:bold 11.67px/19px 'Liberation Mono', monospace;color:#e4ecff;white-space:pre">Disassembly</div><div style="left:1860px;top:406px;width:15px;height:13px;background:#fff;border:1px solid #000;border-top:2px solid #000050;box-sizing:border-box;font:bold 8px/9px 'Liberation Serif', serif;color:#000;text-align:center">1.0</div><div style="left:1880px;top:406px;width:14px;height:14px;background:#c08aa8;border:1px solid #d8b0c8;box-sizing:border-box;color:#fff;font:bold 12px/12px 'Liberation Sans',sans-serif;text-align:center">✕</div><div style="left:944px;top:422px;width:951px;height:20px;background:#ece9d8;"></div><div style="left:944px;top:422px;width:52px;height:20px;background:linear-gradient(180deg,#f8f8f6,#e8e6e2)"></div><div style="left:949px;top:422px;font:10px/20px 'Liberation Mono', monospace;color:#7a7a7a;white-space:pre">Offset:</div><div style="left:996px;top:422px;width:759px;height:20px;background:#fff;border-left:1px solid #7f9db9;border-bottom:1px solid #7f9db9;box-sizing:border-box;font:13.33px/20px 'Liberation Mono', monospace;color:#000;padding-left:3px;white-space:pre">@$scopeip</div><div style="left:1760px;top:423px;width:64px;height:18px;border:1px solid #003c74;border-radius:3px;box-sizing:border-box;background:linear-gradient(180deg,#ffffff 0%,#f4f4f0 60%,#e0dfd8 100%);font:bold 10px/20px 'Liberation Mono', monospace;color:#000;text-align:center">Previous</div><div style="left:1830px;top:423px;width:64px;height:18px;border:1px solid #003c74;border-radius:3px;box-sizing:border-box;background:linear-gradient(180deg,#ffffff 0%,#f4f4f0 60%,#e0dfd8 100%);font:bold 10px/20px 'Liberation Mono', monospace;color:#000;text-align:center">Next</div><div style="left:944px;top:442px;width:951px;height:2px;background:#9a968c;"></div><div style="left:946px;top:444px;width:947px;height:335px;background:#ffffff;"></div><div style="left:944px;top:444px;width:2px;height:335px;background:#aca899;"></div><div style="left:947px;top:614px;width:504px;height:13px;background:#316ac5;"></div><div style="left:948px;top:446px;width:940px;height:333px;overflow:hidden;font:13.33px/13px 'Liberation Mono', monospace;color:#2a2a2a;white-space:pre"><div style="position:static;height:13px">6363bb46 8b45fc          mov     eax,dword ptr [ebp-4]</div><div style="position:static;height:13px">6363bb49 f76508          mul     eax,dword ptr [ebp+8]</div><div style="position:static;height:13px">6363bb4c 52              push    edx</div><div style="position:static;height:13px">6363bb4d 50              push    eax</div><div style="position:static;height:13px">6363bb4e 8d45f8          lea     eax,[ebp-8]</div><div style="position:static;height:13px">6363bb51 e853ffffff      call    mshtml!ULongLongToUInt (6363baa9)</div><div style="position:static;height:13px">6363bb56 8bd8            mov     ebx,eax</div><div style="position:static;height:13px">6363bb58 85db            test    ebx,ebx</div><div style="position:static;height:13px">6363bb5a 7525            jne     mshtml!CImplAry::EnsureSizeWorker+0xb1 (6363bb81)</div><div style="position:static;height:13px">6363bb5c f6470402        test    byte ptr [edi+4],2</div><div style="position:static;height:13px">6363bb60 0f85d6a3fdff    jne     mshtml!CImplAry::EnsureSizeWorker+0x56 (63615f3c)</div><div style="position:static;height:13px">6363bb66 ff75f8          push    dword ptr [ebp-8]</div><div style="position:static;height:13px">6363bb69 8d770c          lea     esi,[edi+0Ch]</div><div style="position:static;height:13px;color:#fff">6363bb6c e864ffffff      call    mshtml!_HeapRealloc (6363bad5)</div><div style="position:static;height:13px">6363bb71 8bd8            mov     ebx,eax</div><div style="position:static;height:13px">6363bb73 85db            test    ebx,ebx</div><div style="position:static;height:13px">6363bb75 750a            jne     mshtml!CImplAry::EnsureSizeWorker+0xb1 (6363bb81)</div><div style="position:static;height:13px">6363bb77 8b45fc          mov     eax,dword ptr [ebp-4]</div><div style="position:static;height:13px">6363bb7a 836704fd        and     dword ptr [edi+4],0FFFFFFFDh</div><div style="position:static;height:13px">6363bb7e 894708          mov     dword ptr [edi+8],eax</div><div style="position:static;height:13px">6363bb81 5e              pop     esi</div><div style="position:static;height:13px">6363bb82 8bc3            mov     eax,ebx</div><div style="position:static;height:13px">6363bb84 5b              pop     ebx</div><div style="position:static;height:13px">6363bb85 c9              leave</div><div style="position:static;height:13px">6363bb86 c20400          ret     4</div><div style="position:static;height:13px">6363bb89 6a04            push    4</div></div><div style="left:944px;top:779px;width:951px;height:6px;background:#d4d0c8;"></div><div style="left:944px;top:785px;width:951px;height:18px;background:linear-gradient(180deg,#7094dc 0%,#7b9fe2 50%,#86ace8 100%)"></div><div style="left:944px;top:787px;width:951px;height:5px;background:repeating-linear-gradient(90deg,rgba(255,255,255,0.10) 0 1px,transparent 1px 4px)"></div><div style="left:944px;top:785px;height:18px;font:bold 11.67px/19px 'Liberation Mono', monospace;color:#e4ecff;white-space:pre">Memory</div><div style="left:1860px;top:787px;width:15px;height:13px;background:repeating-linear-gradient(180deg,#000 0 1px,#fff 1px 3px);border:1px solid #000;box-sizing:border-box"></div><div style="left:1880px;top:787px;width:14px;height:14px;background:#c08aa8;border:1px solid #d8b0c8;box-sizing:border-box;color:#fff;font:bold 12px/12px 'Liberation Sans',sans-serif;text-align:center">✕</div><div style="left:944px;top:790px;width:6px;height:8px;background:#d8dcf8;"></div><div style="left:944px;top:803px;width:951px;height:21px;background:#ece9d8;"></div><div style="left:944px;top:803px;width:64px;height:21px;background:linear-gradient(180deg,#f8f8f6,#e8e6e2)"></div><div style="left:955px;top:803px;font:10px/21px 'Liberation Mono', monospace;color:#7a7a7a;white-space:pre">Virtual:</div><div style="left:946px;top:806px;width:2px;height:15px;background:repeating-linear-gradient(180deg,#6a9a6a 0 2px,transparent 2px 4px)"></div><div style="left:1008px;top:803px;width:511px;height:21px;background:#fff;border-left:1px solid #7f9db9;border-bottom:1px solid #7f9db9;box-sizing:border-box;font:13.33px/21px 'Liberation Mono', monospace;color:#000;padding-left:2px;white-space:pre">esp</div><div style="left:1527px;top:806px;width:2px;height:15px;background:repeating-linear-gradient(180deg,#909090 0 2px,transparent 2px 4px)"></div><div style="left:1530px;top:803px;width:101px;height:21px;background:#ece9d8"></div><div style="left:1537px;top:803px;font:10px/21px 'Liberation Mono', monospace;color:#7a7a7a;white-space:pre">Display format:</div><div style="left:1631px;top:804px;width:119px;height:20px;background:#fff;border:1px solid #7f9db9;box-sizing:border-box;font:13.33px/19px 'Liberation Mono', monospace;color:#000;padding-left:4px;white-space:pre">Pointer and</div><div style="left:1733px;top:805px;width:16px;height:18px;background:linear-gradient(135deg,#dce6ff,#b0c4f8);border-radius:2px"><svg width="16" height="18" style="position:absolute;left:0;top:0"><path d="M4,7.5 L8,11.5 L12,7.5" fill="none" stroke="#4d6185" stroke-width="2.2"/></svg></div><div style="left:1760px;top:804px;width:64px;height:19px;border:1px solid #003c74;border-radius:3px;box-sizing:border-box;background:linear-gradient(180deg,#ffffff 0%,#f4f4f0 60%,#e0dfd8 100%);font:bold 10px/21px 'Liberation Mono', monospace;color:#000;text-align:center">Previous</div><div style="left:1830px;top:804px;width:64px;height:19px;border:1px solid #003c74;border-radius:3px;box-sizing:border-box;background:linear-gradient(180deg,#ffffff 0%,#f4f4f0 60%,#e0dfd8 100%);font:bold 10px/21px 'Liberation Mono', monospace;color:#000;text-align:center">Next</div><div style="left:944px;top:824px;width:951px;height:2px;background:#9a968c;"></div><div style="left:946px;top:826px;width:931px;height:313px;background:#ffffff;"></div><div style="left:944px;top:826px;width:2px;height:329px;background:#aca899;"></div><div style="left:948px;top:828px;width:925px;height:311px;overflow:hidden;font:13.33px/13px 'Liberation Mono', monospace;color:#2a2a2a;white-space:pre"><div style="position:static;height:13px">0637e760 00000070</div><div style="position:static;height:13px">0637e764 08018f38</div><div style="position:static;height:13px">0637e768 08018ea8</div><div style="position:static;height:13px">0637e76c 00000070</div><div style="position:static;height:13px">0637e770 00000004</div><div style="position:static;height:13px">0637e774 0637e81c</div><div style="position:static;height:13px">0637e778 635d28fb mshtml!CTableLayout::CalculateMinMax+0x1de</div><div style="position:static;height:13px">0637e77c 0000001c</div><div style="position:static;height:13px">0637e780 0637ea7c</div><div style="position:static;height:13px">0637e784 00000000</div><div style="position:static;height:13px">0637e788 08018ea8</div><div style="position:static;height:13px">0637e78c 00000000</div><div style="position:static;height:13px">0637e790 00000000</div><div style="position:static;height:13px">0637e794 00000000</div><div style="position:static;height:13px">0637e798 6363332c mshtml!CSharedStyleSheet::CAryRulesList::`vftable'</div><div style="position:static;height:13px">0637e79c 00000000</div><div style="position:static;height:13px">0637e7a0 00000000</div><div style="position:static;height:13px">0637e7a4 00000000</div><div style="position:static;height:13px">0637e7a8 00000000</div><div style="position:static;height:13px">0637e7ac 00000000</div><div style="position:static;height:13px">0637e7b0 00000000</div><div style="position:static;height:13px">0637e7b4 00000000</div><div style="position:static;height:13px">0637e7b8 00000000</div><div style="position:static;height:13px">0637e7bc 00687ed4</div></div><div style="left:1877px;top:826px;width:16px;height:313px;background:#f4f4f0;"></div><div style="left:1878px;top:827px;width:15px;height:15px;background:linear-gradient(135deg,#dce6ff,#b8ccf8);border-radius:2px"><svg width="15" height="15" style="position:absolute;left:0;top:0"><path d="M3.5,9 L7.5,5 L11.5,9" fill="none" stroke="#4d6185" stroke-width="2.2"/></svg></div><div style="left:1878px;top:844px;width:15px;height:263px;background:linear-gradient(90deg,#c8d4f8,#bccaf8);border:1px solid #fff;border-radius:2px;box-sizing:border-box"></div><div style="left:1881px;top:972px;width:8px;height:6px;background:repeating-linear-gradient(180deg,#8fa8e8 0 1px,transparent 1px 2px)"></div><div style="left:1878px;top:1122px;width:15px;height:15px;background:linear-gradient(135deg,#dce6ff,#b8ccf8);border-radius:2px"><svg width="15" height="15" style="position:absolute;left:0;top:0"><path d="M3.5,6 L7.5,10 L11.5,6" fill="none" stroke="#4d6185" stroke-width="2.2"/></svg></div><div style="left:946px;top:1139px;width:931px;height:16px;background:#f4f4f0;"></div><div style="left:947px;top:1140px;width:14px;height:14px;background:linear-gradient(135deg,#dce6ff,#b8ccf8);border-radius:2px"><svg width="15" height="15" style="position:absolute;left:0;top:0"><path d="M9,3.5 L5,7.5 L9,11.5" fill="none" stroke="#4d6185" stroke-width="2.2"/></svg></div><div style="left:963px;top:1139px;width:16px;height:16px;background:linear-gradient(135deg,#dce6ff,#b8ccf8);border:1px solid #fff;border-radius:2px;box-sizing:border-box"></div><div style="left:1860px;top:1140px;width:14px;height:14px;background:linear-gradient(135deg,#dce6ff,#b8ccf8);border-radius:2px"><svg width="15" height="15" style="position:absolute;left:0;top:0"><path d="M5.5,3.5 L9.5,7.5 L5.5,11.5" fill="none" stroke="#4d6185" stroke-width="2.2"/></svg></div><div style="left:1876px;top:1139px;width:17px;height:16px;background:#ece9d8;"></div><div style="left:944px;top:1155px;width:957px;height:7px;background:#d4d0c8;"></div><svg style="position:absolute;left:0;top:0" width="1903" height="1494"><defs><filter id="sh" x="-10%" y="-10%" width="120%" height="120%"><feGaussianBlur in="SourceAlpha" stdDeviation="2.2"/><feOffset dx="3" dy="3" result="o"/><feComponentTransfer><feFuncA type="linear" slope="0.65"/></feComponentTransfer><feMerge><feMergeNode/><feMergeNode in="SourceGraphic"/></feMerge></filter></defs><path d="M852.0,1409.5 L861.1,1409.2 L870.2,1408.9 L879.2,1408.6 L888.2,1408.2 L897.1,1407.8 L905.9,1407.3 L914.6,1406.9 L923.3,1406.4 L932.0,1405.9 L940.6,1405.4 L949.1,1404.8 L957.5,1404.3 L965.9,1403.7 L974.2,1403.0 L982.5,1402.4 L990.7,1401.7 L998.9,1401.0 L1006.9,1400.3 L1015.0,1399.6 L1022.9,1398.8 L1030.8,1398.1 L1038.7,1397.3 L1046.5,1396.4 L1054.2,1395.6 L1061.9,1394.7 L1069.5,1393.8 L1077.0,1392.9 L1084.5,1392.0 L1091.9,1391.0 L1099.3,1390.0 L1106.6,1389.0 L1113.8,1388.0 L1121.0,1386.9 L1128.2,1385.9 L1135.3,1384.8 L1142.3,1383.7 L1149.2,1382.5 L1156.1,1381.4 L1163.0,1380.2 L1169.8,1379.0 L1176.5,1377.8 L1183.2,1376.6 L1189.8,1375.3 L1196.3,1374.0 L1202.9,1372.7 L1209.3,1371.4 L1215.7,1370.0 L1222.0,1368.7 L1228.3,1367.3 L1234.5,1365.9 L1240.7,1364.5 L1246.8,1363.0 L1252.8,1361.6 L1258.8,1360.1 L1264.8,1358.6 L1270.7,1357.1 L1276.5,1355.5 L1282.3,1354.0 L1288.0,1352.4 L1293.7,1350.8 L1299.3,1349.2 L1304.9,1347.5 L1310.4,1345.9 L1315.8,1344.2 L1321.2,1342.5 L1326.6,1340.8 L1331.9,1339.1 L1337.1,1337.3 L1342.3,1335.6 L1347.4,1333.8 L1352.5,1332.0 L1357.5,1330.2 L1362.5,1328.3 L1367.4,1326.5 L1372.3,1324.6 L1377.1,1322.7 L1381.9,1320.8 L1386.6,1318.9 L1391.2,1317.0 L1395.8,1315.0 L1400.4,1313.0 L1404.9,1311.0 L1409.4,1309.0 L1413.8,1307.0 L1418.1,1305.0 L1422.4,1302.9 L1426.7,1300.8 L1430.9,1298.7 L1435.0,1296.6 L1439.1,1294.5 L1443.2,1292.4 L1447.2,1290.2 L1451.2,1288.1 L1455.1,1285.9 L1458.9,1283.7 L1462.7,1281.5 L1466.5,1279.2 L1470.2,1277.0 L1473.8,1274.7 L1477.5,1272.4 L1481.0,1270.2 L1484.5,1267.8 L1488.0,1265.5 L1491.4,1263.2 L1494.8,1260.8 L1498.1,1258.5 L1501.4,1256.1 L1504.6,1253.7 L1507.8,1251.3 L1510.9,1248.9 L1514.0,1246.4 L1517.0,1244.0 L1520.0,1241.5 L1523.0,1239.0 L1525.9,1236.5 L1528.7,1234.0 L1531.5,1231.5 L1534.3,1228.9 L1537.0,1226.4 L1539.7,1223.8 L1542.3,1221.2 L1544.9,1218.7 L1547.4,1216.1 L1549.9,1213.4 L1552.3,1210.8 L1554.7,1208.2 L1557.1,1205.5 L1559.4,1202.8 L1561.6,1200.2 L1563.9,1197.5 L1566.0,1194.8 L1568.2,1192.0 L1570.2,1189.3 L1572.3,1186.6 L1574.3,1183.8 L1576.2,1181.0 L1578.1,1178.3 L1580.0,1175.5 L1581.8,1172.7 L1583.6,1169.8 L1585.3,1167.0 L1587.0,1164.2 L1588.7,1161.3 L1590.3,1158.5 L1591.9,1155.6 L1593.4,1152.7 L1594.9,1149.8 L1596.3,1146.9 L1597.7,1144.0 L1599.0,1141.1 L1600.4,1138.1 L1601.6,1135.2 L1602.9,1132.2 L1604.0,1129.3 L1605.2,1126.3 L1606.3,1123.3 L1607.4,1120.3 L1608.4,1117.3 L1609.4,1114.3 L1610.3,1111.3 L1611.2,1108.3 L1612.1,1105.2 L1612.9,1102.2 L1613.7,1099.1 L1614.4,1096.0 L1615.2,1093.0 L1615.8,1089.9 L1616.5,1086.8 L1617.1,1083.7 L1617.6,1080.6 L1618.1,1077.4 L1618.6,1074.3 L1619.1,1071.2 L1619.5,1068.0 L1619.8,1064.9 L1620.2,1061.7 L1620.4,1058.6 L1620.7,1055.4 L1620.9,1052.2 L1621.1,1049.0 L1621.2,1045.8 L1621.3,1042.6 L1621.4,1039.4 L1621.4,1036.2 L1621.4,1033.0 L1621.4,1029.7 L1621.3,1026.5 L1621.2,1023.2 L1621.0,1020.0 L1620.8,1016.7 L1620.6,1013.5 L1620.3,1010.2 L1620.0,1006.9 L1619.7,1003.6 L1619.3,1000.3 L1618.9,997.1 L1618.4,993.8 L1617.9,990.4 L1617.4,987.1 L1616.9,983.8 L1616.3,980.5 L1615.7,977.2 L1615.0,973.8 L1614.3,970.5 L1613.6,967.2 L1612.9,963.8 L1612.1,960.5 L1611.3,957.1 L1610.4,953.8 L1609.5,950.4 L1608.6,947.0 L1607.7,943.7 L1606.7,940.3 L1605.7,936.9 L1604.6,933.5 L1603.5,930.1 L1602.4,926.8 L1601.3,923.4 L1600.1,920.0 L1598.9,916.6 L1597.7,913.2 L1596.4,909.8 L1595.1,906.4 L1593.7,902.9 L1592.4,899.5 L1591.0,896.1 L1589.6,892.7 L1588.1,889.3 L1586.6,885.8 L1585.1,882.4 L1583.6,879.0 L1582.0,875.6 L1580.4,872.1 L1578.8,868.7 L1577.1,865.3 L1575.4,861.8 L1573.7,858.4 L1571.9,854.9 L1570.1,851.5 L1568.3,848.1 L1566.5,844.6 L1564.6,841.2 L1562.7,837.7 L1560.8,834.3 L1558.8,830.8 L1556.9,827.4 L1554.9,823.9 L1552.8,820.5 L1550.7,817.1 L1548.7,813.6 L1546.5,810.2 L1544.4,806.7 L1542.2,803.3 L1540.0,799.8 L1537.8,796.4 L1535.5,792.9 L1533.3,789.5 L1531.0,786.0 L1528.6,782.6 L1526.3,779.2 L1523.9,775.7 L1521.5,772.3 L1519.0,768.8 L1516.6,765.4 L1514.1,761.9 L1511.6,758.5 L1509.1,755.1 L1506.5,751.6 L1503.9,748.2 L1501.3,744.8 L1498.7,741.3 L1496.1,737.9 L1493.4,734.5 L1490.7,731.1 L1488.0,727.6 L1485.2,724.2 L1482.5,720.8 L1479.7,717.4 L1476.8,714.0 L1474.0,710.6 L1471.2,707.2 L1468.3,703.7 L1465.4,700.3 L1462.4,696.9 L1459.5,693.5 L1456.5,690.1 L1453.5,686.8 L1450.5,683.4 L1447.5,680.0 L1444.4,676.6 L1441.4,673.2 L1438.3,669.9 L1435.2,666.5 L1432.0,663.1 L1428.9,659.8 L1425.7,656.4 L1422.5,653.0 L1419.3,649.7 L1416.0,646.4 L1420.8,643.4 L1397.7,634.0 L1406.5,657.3 L1409.6,652.6 L1412.8,655.9 L1416.0,659.3 L1419.2,662.6 L1422.4,665.9 L1425.6,669.2 L1428.7,672.5 L1431.8,675.8 L1434.9,679.2 L1438.0,682.5 L1441.0,685.8 L1444.1,689.2 L1447.1,692.5 L1450.1,695.9 L1453.0,699.2 L1456.0,702.6 L1458.9,705.9 L1461.8,709.3 L1464.7,712.7 L1467.5,716.0 L1470.3,719.4 L1473.2,722.8 L1475.9,726.1 L1478.7,729.5 L1481.5,732.9 L1484.2,736.2 L1486.9,739.6 L1489.5,743.0 L1492.2,746.4 L1494.8,749.8 L1497.4,753.2 L1500.0,756.6 L1502.5,759.9 L1505.1,763.3 L1507.6,766.7 L1510.0,770.1 L1512.5,773.5 L1514.9,776.9 L1517.3,780.3 L1519.7,783.7 L1522.0,787.1 L1524.4,790.5 L1526.7,793.9 L1528.9,797.3 L1531.2,800.7 L1533.4,804.1 L1535.6,807.5 L1537.8,810.9 L1539.9,814.3 L1542.0,817.7 L1544.1,821.1 L1546.2,824.5 L1548.2,827.9 L1550.2,831.3 L1552.2,834.7 L1554.1,838.1 L1556.1,841.5 L1558.0,844.8 L1559.8,848.2 L1561.7,851.6 L1563.5,855.0 L1565.3,858.4 L1567.1,861.8 L1568.8,865.1 L1570.5,868.5 L1572.2,871.9 L1573.8,875.3 L1575.4,878.6 L1577.0,882.0 L1578.6,885.4 L1580.1,888.7 L1581.6,892.1 L1583.1,895.5 L1584.5,898.8 L1585.9,902.2 L1587.3,905.5 L1588.7,908.9 L1590.0,912.2 L1591.3,915.6 L1592.5,918.9 L1593.7,922.2 L1594.9,925.6 L1596.1,928.9 L1597.2,932.2 L1598.3,935.5 L1599.4,938.9 L1600.4,942.2 L1601.4,945.5 L1602.4,948.8 L1603.3,952.1 L1604.2,955.4 L1605.1,958.7 L1606.0,962.0 L1606.8,965.3 L1607.5,968.5 L1608.3,971.8 L1609.0,975.1 L1609.7,978.4 L1610.3,981.6 L1610.9,984.9 L1611.5,988.1 L1612.0,991.4 L1612.5,994.6 L1613.0,997.8 L1613.4,1001.1 L1613.8,1004.3 L1614.2,1007.5 L1614.5,1010.7 L1614.8,1013.9 L1615.1,1017.1 L1615.3,1020.3 L1615.5,1023.5 L1615.6,1026.7 L1615.8,1029.9 L1615.9,1033.0 L1615.9,1036.2 L1615.9,1039.4 L1615.9,1042.5 L1615.8,1045.6 L1615.7,1048.8 L1615.6,1051.9 L1615.4,1055.0 L1615.2,1058.2 L1615.0,1061.3 L1614.7,1064.4 L1614.4,1067.5 L1614.0,1070.5 L1613.6,1073.6 L1613.2,1076.7 L1612.7,1079.8 L1612.2,1082.8 L1611.7,1085.9 L1611.1,1088.9 L1610.5,1091.9 L1609.8,1095.0 L1609.1,1098.0 L1608.4,1101.0 L1607.6,1104.0 L1606.8,1107.0 L1605.9,1109.9 L1605.0,1112.9 L1604.0,1115.9 L1603.0,1118.8 L1602.0,1121.8 L1601.0,1124.7 L1599.8,1127.6 L1598.7,1130.6 L1597.5,1133.5 L1596.3,1136.4 L1595.0,1139.3 L1593.7,1142.1 L1592.3,1145.0 L1590.9,1147.9 L1589.5,1150.7 L1588.0,1153.6 L1586.5,1156.4 L1584.9,1159.2 L1583.3,1162.0 L1581.7,1164.8 L1580.0,1167.6 L1578.3,1170.4 L1576.5,1173.2 L1574.7,1175.9 L1572.8,1178.7 L1570.9,1181.4 L1568.9,1184.1 L1567.0,1186.8 L1564.9,1189.5 L1562.8,1192.2 L1560.7,1194.9 L1558.5,1197.6 L1556.3,1200.2 L1554.1,1202.9 L1551.8,1205.5 L1549.4,1208.1 L1547.0,1210.8 L1544.6,1213.4 L1542.1,1215.9 L1539.6,1218.5 L1537.0,1221.1 L1534.4,1223.6 L1531.7,1226.2 L1529.0,1228.7 L1526.2,1231.2 L1523.4,1233.7 L1520.6,1236.2 L1517.7,1238.7 L1514.7,1241.1 L1511.7,1243.6 L1508.7,1246.0 L1505.6,1248.4 L1502.5,1250.8 L1499.3,1253.2 L1496.0,1255.6 L1492.8,1258.0 L1489.4,1260.3 L1486.1,1262.7 L1482.6,1265.0 L1479.2,1267.3 L1475.6,1269.6 L1472.1,1271.9 L1468.4,1274.1 L1464.8,1276.4 L1461.0,1278.6 L1457.3,1280.9 L1453.5,1283.1 L1449.6,1285.3 L1445.7,1287.4 L1441.7,1289.6 L1437.7,1291.7 L1433.6,1293.9 L1429.5,1296.0 L1425.3,1298.1 L1421.1,1300.2 L1416.8,1302.2 L1412.5,1304.3 L1408.1,1306.3 L1403.7,1308.3 L1399.2,1310.3 L1394.7,1312.3 L1390.1,1314.3 L1385.5,1316.2 L1380.8,1318.2 L1376.0,1320.1 L1371.2,1322.0 L1366.4,1323.9 L1361.5,1325.7 L1356.6,1327.6 L1351.6,1329.4 L1346.5,1331.2 L1341.4,1333.0 L1336.2,1334.8 L1331.0,1336.6 L1325.7,1338.3 L1320.4,1340.0 L1315.0,1341.7 L1309.6,1343.4 L1304.1,1345.1 L1298.6,1346.7 L1293.0,1348.4 L1287.3,1350.0 L1281.6,1351.6 L1275.9,1353.2 L1270.1,1354.7 L1264.2,1356.3 L1258.3,1357.8 L1252.3,1359.3 L1246.3,1360.8 L1240.2,1362.3 L1234.0,1363.7 L1227.8,1365.1 L1221.5,1366.5 L1215.2,1367.9 L1208.9,1369.3 L1202.4,1370.6 L1195.9,1372.0 L1189.4,1373.3 L1182.8,1374.5 L1176.1,1375.8 L1169.4,1377.1 L1162.6,1378.3 L1155.8,1379.5 L1148.9,1380.7 L1142.0,1381.8 L1135.0,1383.0 L1127.9,1384.1 L1120.8,1385.2 L1113.6,1386.3 L1106.4,1387.4 L1099.1,1388.4 L1091.7,1389.4 L1084.3,1390.4 L1076.8,1391.4 L1069.3,1392.4 L1061.7,1393.3 L1054.0,1394.2 L1046.3,1395.1 L1038.5,1396.0 L1030.7,1396.8 L1022.8,1397.6 L1014.9,1398.4 L1006.8,1399.2 L998.8,1400.0 L990.6,1400.7 L982.4,1401.4 L974.2,1402.1 L965.8,1402.8 L957.5,1403.4 L949.0,1404.0 L940.5,1404.6 L931.9,1405.2 L923.3,1405.7 L914.6,1406.2 L905.8,1406.8 L897.0,1407.2 L888.1,1407.7 L879.2,1408.1 L870.2,1408.5 L861.1,1408.9 L852.0,1409.3 Z" fill="#ff0000" stroke="#ffffff" stroke-width="3" stroke-linejoin="miter" paint-order="stroke" filter="url(#sh)"/><path d="M671.2,755.0 L671.9,756.5 L672.5,757.9 L673.1,759.4 L673.7,760.9 L674.3,762.4 L674.8,763.9 L675.3,765.4 L675.8,766.9 L676.3,768.5 L676.8,770.1 L677.2,771.6 L677.6,773.2 L678.0,774.8 L678.4,776.4 L678.7,778.0 L679.0,779.6 L679.3,781.2 L679.6,782.9 L679.9,784.5 L680.1,786.1 L680.3,787.8 L680.5,789.4 L680.7,791.1 L680.8,792.7 L680.9,794.4 L681.0,796.0 L681.1,797.7 L681.1,799.4 L681.2,801.0 L681.2,802.7 L681.1,804.3 L681.1,806.0 L681.0,807.6 L680.9,809.3 L680.8,810.9 L680.7,812.6 L680.5,814.2 L680.4,815.9 L680.1,817.5 L679.9,819.1 L679.7,820.7 L679.4,822.4 L679.1,824.0 L678.8,825.6 L678.4,827.1 L678.0,828.7 L677.6,830.3 L677.2,831.8 L676.8,833.4 L676.3,834.9 L675.8,836.4 L675.3,837.9 L674.7,839.4 L674.2,840.9 L673.6,842.4 L672.9,843.8 L672.3,845.3 L671.6,846.7 L670.9,848.1 L670.2,849.5 L669.5,850.8 L668.7,852.2 L667.9,853.5 L667.1,854.8 L666.3,856.1 L665.4,857.4 L664.5,858.7 L663.6,859.9 L662.7,861.1 L661.8,862.4 L660.8,863.5 L659.8,864.7 L658.8,865.9 L657.8,867.0 L656.7,868.1 L655.7,869.2 L654.6,870.3 L653.5,871.4 L652.4,872.5 L651.2,873.5 L650.1,874.5 L648.9,875.5 L647.7,876.5 L646.5,877.4 L645.3,878.4 L644.0,879.3 L642.8,880.2 L641.5,881.0 L640.2,881.9 L638.9,882.7 L637.6,883.6 L636.3,884.4 L634.9,885.1 L633.5,885.9 L632.2,886.7 L630.8,887.4 L629.4,888.1 L628.0,888.8 L626.6,889.4 L625.1,890.1 L623.7,890.7 L622.2,891.4 L620.8,892.0 L619.3,892.6 L617.8,893.2 L616.3,893.7 L614.8,894.3 L613.3,894.8 L611.8,895.4 L610.3,895.9 L608.8,896.4 L607.2,896.9 L605.7,897.4 L604.2,897.9 L602.6,898.4 L601.1,898.8 L599.5,899.3 L598.0,899.7 L596.4,900.2 L594.9,900.6 L593.3,901.1 L591.8,901.5 L590.2,901.9 L588.6,902.3 L587.1,902.7 L585.5,903.1 L584.0,903.5 L582.4,903.9 L580.8,904.3 L579.3,904.7 L577.7,905.1 L576.1,905.4 L574.6,905.8 L573.0,906.1 L571.4,906.5 L569.9,906.8 L568.3,907.2 L566.7,907.5 L565.2,907.8 L563.6,908.2 L562.0,908.5 L560.4,908.8 L558.9,909.1 L557.3,909.4 L555.7,909.7 L554.1,910.0 L552.5,910.3 L551.0,910.5 L549.4,910.8 L547.8,911.1 L546.2,911.3 L544.6,911.6 L543.0,911.9 L541.5,912.1 L539.9,912.4 L538.3,912.6 L536.7,912.8 L535.1,913.1 L533.5,913.3 L531.9,913.5 L530.3,913.7 L528.7,913.9 L527.1,914.1 L525.5,914.3 L524.0,914.5 L522.4,914.7 L520.8,914.9 L519.2,915.1 L517.6,915.3 L516.0,915.5 L514.4,915.6 L512.8,915.8 L511.2,916.0 L509.6,916.1 L508.0,916.3 L506.4,916.4 L504.8,916.6 L503.2,916.7 L501.6,916.9 L500.0,917.0 L498.3,917.1 L496.7,917.3 L495.1,917.4 L493.5,917.5 L491.9,917.6 L490.3,917.7 L488.7,917.9 L487.1,918.0 L485.5,918.1 L483.9,918.2 L482.3,918.3 L480.7,918.4 L479.1,918.5 L477.4,918.5 L475.8,918.6 L474.2,918.7 L472.6,918.8 L471.0,918.9 L469.4,918.9 L467.8,919.0 L466.2,919.1 L464.5,919.2 L462.9,919.2 L461.3,919.3 L459.7,919.3 L458.1,919.4 L456.5,919.4 L454.9,919.5 L453.3,919.5 L451.6,919.6 L450.0,919.6 L448.4,919.7 L446.8,919.7 L445.2,919.8 L443.6,919.8 L441.9,919.8 L440.3,919.9 L438.7,919.9 L437.1,919.9 L435.5,919.9 L433.9,920.0 L432.2,920.0 L430.6,920.0 L429.0,920.0 L427.4,920.0 L425.8,920.0 L424.2,920.1 L422.5,920.1 L420.9,920.1 L419.3,920.1 L417.7,920.1 L416.1,920.1 L414.5,920.1 L412.9,920.1 L411.2,920.1 L409.6,920.1 L408.0,920.1 L406.4,920.1 L404.8,920.1 L403.2,920.1 L401.5,920.1 L399.9,920.1 L398.3,920.1 L396.7,920.1 L395.1,920.1 L393.5,920.1 L391.9,920.1 L390.2,920.1 L388.6,920.1 L387.0,920.1 L385.4,920.0 L383.8,920.0 L382.2,920.0 L380.6,920.0 L379.0,920.0 L377.3,920.0 L375.7,920.0 L374.1,920.0 L372.5,920.0 L370.9,919.9 L369.3,919.9 L367.7,919.9 L366.1,919.9 L364.5,919.9 L362.9,919.9 L361.2,919.9 L359.6,919.9 L358.0,919.8 L356.4,919.8 L354.8,919.8 L353.2,919.8 L351.6,919.8 L350.0,919.8 L348.4,919.8 L346.8,919.8 L345.2,919.8 L343.6,919.8 L342.0,919.8 L340.4,919.7 L338.8,919.7 L337.2,919.7 L335.6,919.7 L334.0,919.7 L332.4,919.7 L330.8,919.7 L329.2,919.7 L327.6,919.7 L326.0,919.7 L324.4,919.7 L322.8,919.8 L321.2,919.8 L319.6,919.8 L318.1,919.8 L316.5,919.8 L314.9,919.8 L313.3,919.8 L311.7,919.8 L310.1,919.9 L308.5,919.9 L310.4,912.6 L285.1,923.8 L310.8,934.1 L308.7,926.9 L310.2,926.8 L311.8,926.8 L313.4,926.8 L315.0,926.7 L316.6,926.7 L318.1,926.7 L319.7,926.6 L321.3,926.6 L322.9,926.6 L324.5,926.6 L326.1,926.5 L327.7,926.5 L329.3,926.5 L330.8,926.5 L332.4,926.5 L334.0,926.5 L335.6,926.4 L337.2,926.4 L338.8,926.4 L340.4,926.4 L342.0,926.4 L343.6,926.4 L345.2,926.4 L346.8,926.3 L348.4,926.3 L350.0,926.3 L351.6,926.3 L353.2,926.3 L354.8,926.3 L356.4,926.3 L358.0,926.3 L359.6,926.3 L361.2,926.3 L362.8,926.3 L364.5,926.3 L366.1,926.3 L367.7,926.3 L369.3,926.2 L370.9,926.2 L372.5,926.2 L374.1,926.2 L375.7,926.2 L377.3,926.2 L378.9,926.2 L380.6,926.2 L382.2,926.2 L383.8,926.2 L385.4,926.2 L387.0,926.2 L388.6,926.2 L390.2,926.2 L391.9,926.2 L393.5,926.1 L395.1,926.1 L396.7,926.1 L398.3,926.1 L399.9,926.1 L401.6,926.1 L403.2,926.1 L404.8,926.1 L406.4,926.0 L408.0,926.0 L409.7,926.0 L411.3,926.0 L412.9,926.0 L414.5,925.9 L416.1,925.9 L417.8,925.9 L419.4,925.9 L421.0,925.8 L422.6,925.8 L424.2,925.8 L425.9,925.7 L427.5,925.7 L429.1,925.7 L430.7,925.6 L432.4,925.6 L434.0,925.6 L435.6,925.5 L437.2,925.5 L438.8,925.4 L440.5,925.4 L442.1,925.3 L443.7,925.3 L445.3,925.2 L447.0,925.1 L448.6,925.1 L450.2,925.0 L451.8,925.0 L453.4,924.9 L455.1,924.8 L456.7,924.7 L458.3,924.7 L459.9,924.6 L461.5,924.5 L463.2,924.4 L464.8,924.3 L466.4,924.3 L468.0,924.2 L469.7,924.1 L471.3,924.0 L472.9,923.9 L474.5,923.8 L476.1,923.7 L477.8,923.6 L479.4,923.5 L481.0,923.3 L482.6,923.2 L484.2,923.1 L485.8,923.0 L487.5,922.9 L489.1,922.7 L490.7,922.6 L492.3,922.5 L493.9,922.3 L495.5,922.2 L497.2,922.0 L498.8,921.9 L500.4,921.7 L502.0,921.6 L503.6,921.4 L505.2,921.2 L506.8,921.1 L508.4,920.9 L510.0,920.7 L511.7,920.5 L513.3,920.3 L514.9,920.1 L516.5,920.0 L518.1,919.8 L519.7,919.6 L521.3,919.3 L522.9,919.1 L524.5,918.9 L526.1,918.7 L527.7,918.5 L529.3,918.2 L530.9,918.0 L532.5,917.8 L534.1,917.5 L535.7,917.3 L537.3,917.0 L538.9,916.8 L540.5,916.5 L542.1,916.2 L543.7,916.0 L545.3,915.7 L546.9,915.4 L548.5,915.1 L550.1,914.8 L551.7,914.5 L553.3,914.2 L554.9,913.9 L556.5,913.6 L558.0,913.3 L559.6,913.0 L561.2,912.6 L562.8,912.3 L564.4,912.0 L566.0,911.6 L567.5,911.3 L569.1,910.9 L570.7,910.6 L572.3,910.2 L573.9,909.8 L575.4,909.4 L577.0,909.1 L578.6,908.7 L580.2,908.3 L581.7,907.9 L583.3,907.4 L584.9,907.0 L586.4,906.6 L588.0,906.2 L589.6,905.7 L591.1,905.3 L592.7,904.9 L594.3,904.4 L595.8,903.9 L597.4,903.5 L598.9,903.0 L600.5,902.5 L602.1,902.0 L603.6,901.5 L605.2,901.0 L606.7,900.5 L608.3,900.0 L609.8,899.5 L611.3,898.9 L612.9,898.4 L614.4,897.8 L615.9,897.2 L617.4,896.6 L618.9,896.0 L620.4,895.4 L621.9,894.8 L623.4,894.1 L624.9,893.5 L626.4,892.8 L627.8,892.1 L629.3,891.4 L630.7,890.7 L632.1,889.9 L633.5,889.2 L634.9,888.4 L636.3,887.6 L637.7,886.8 L639.0,885.9 L640.4,885.1 L641.7,884.2 L643.0,883.3 L644.3,882.3 L645.6,881.4 L646.9,880.4 L648.1,879.5 L649.3,878.5 L650.5,877.4 L651.7,876.4 L652.9,875.3 L654.0,874.3 L655.2,873.2 L656.3,872.0 L657.4,870.9 L658.5,869.8 L659.5,868.6 L660.6,867.4 L661.6,866.2 L662.6,865.0 L663.5,863.7 L664.5,862.5 L665.4,861.2 L666.3,859.9 L667.2,858.6 L668.0,857.3 L668.9,855.9 L669.7,854.5 L670.5,853.2 L671.2,851.8 L672.0,850.4 L672.7,848.9 L673.4,847.5 L674.0,846.0 L674.6,844.5 L675.2,843.1 L675.8,841.6 L676.4,840.0 L676.9,838.5 L677.4,837.0 L677.9,835.4 L678.3,833.8 L678.8,832.3 L679.2,830.7 L679.6,829.1 L679.9,827.5 L680.2,825.9 L680.5,824.2 L680.8,822.6 L681.1,821.0 L681.3,819.3 L681.5,817.7 L681.7,816.0 L681.8,814.4 L682.0,812.7 L682.1,811.0 L682.2,809.4 L682.2,807.7 L682.3,806.0 L682.3,804.3 L682.3,802.7 L682.2,801.0 L682.2,799.3 L682.1,797.6 L682.0,796.0 L681.9,794.3 L681.7,792.6 L681.5,791.0 L681.3,789.3 L681.1,787.7 L680.9,786.0 L680.6,784.4 L680.3,782.7 L680.0,781.1 L679.7,779.5 L679.3,777.9 L679.0,776.2 L678.6,774.6 L678.1,773.1 L677.7,771.5 L677.2,769.9 L676.8,768.4 L676.3,766.8 L675.7,765.3 L675.2,763.8 L674.6,762.2 L674.0,760.8 L673.4,759.3 L672.8,757.8 L672.1,756.4 L671.4,754.9 Z" fill="#ff80c4" stroke="#ffffff" stroke-width="3" stroke-linejoin="miter" paint-order="stroke" filter="url(#sh)"/></svg><svg style="position:absolute;left:0;top:0" width="1903" height="1494"><path d="M945,843.5 L1108,843.5" stroke="#ff2020" stroke-width="2"/></svg></div></body></html>
